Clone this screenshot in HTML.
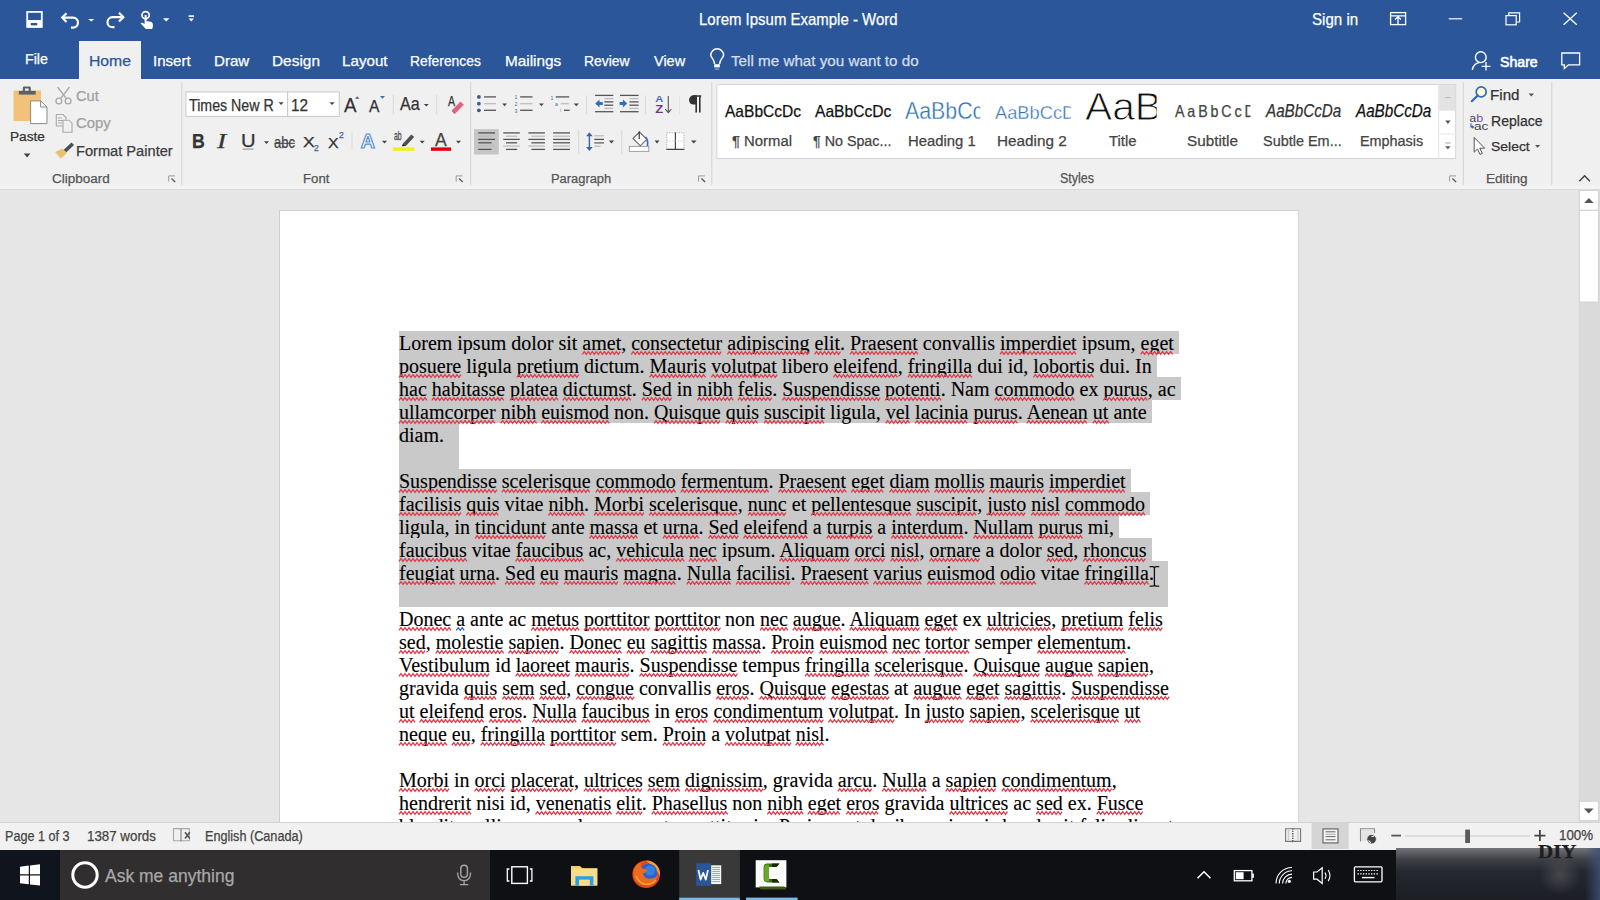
<!DOCTYPE html>
<html><head><meta charset="utf-8">
<style>
*{box-sizing:border-box;margin:0;padding:0}
html,body{width:1600px;height:900px;overflow:hidden;background:#e6e6e6;font-family:"Liberation Sans",sans-serif}
.a{position:absolute}
.lb{position:absolute;white-space:pre;transform-origin:0 0;font-family:"Liberation Sans",sans-serif;-webkit-text-stroke-width:0.25px}
svg{position:absolute;overflow:visible}
#title{left:0;top:0;width:1600px;height:79px;background:#2b579a}
#hometab{left:79px;top:41px;width:62px;height:38px;background:#f0f0f0}
#ribbon{left:0;top:79px;width:1600px;height:111px;background:#f0f0f0;border-bottom:1px solid #dadada;box-shadow:inset 0 -3px 0 #f4f4f4}
#docarea{left:0;top:190px;width:1578px;height:632px;background:#e6e6e7;overflow:hidden}
#page{left:279px;top:20px;width:1020px;height:700px;background:#fff;border:1px solid #cfcfcf;border-right-color:#d6d6d6}
#status{left:0;top:822px;width:1600px;height:28px;background:#f1f1f1;border-top:1px solid #d4d4d4}
#taskbar{left:0;top:850px;width:1600px;height:50px;background:#0f1013}
.doc{position:absolute;left:119px;font-family:"Liberation Serif",serif;font-size:20px;line-height:23px;color:#000;white-space:pre;-webkit-text-stroke:0.12px #000}
.ln{position:absolute;left:0;height:23px;padding-top:1px;white-space:pre}
.sel{background:#c9c9c9}
.sep{position:absolute;width:1px;background:#dadada}
.sq{}
.sqb{}

</style></head><body>
<div id="title" class="a"></div>
<div id="hometab" class="a"></div>
<div id="ribbon" class="a"></div>
<div id="docarea" class="a">
 <div id="page" class="a">
  <div class="doc" style="top:120px;left:119px">
<div class="ln sel" style="top:0px">Lorem ipsum dolor sit <span class="sq">amet</span>, <span class="sq">consectetur</span> <span class="sq">adipiscing</span> <span class="sq">elit</span>. <span class="sq">Praesent</span> convallis <span class="sq">imperdiet</span> ipsum, <span class="sq">eget</span> </div>
<div class="ln sel" style="top:23px"><span class="sq">posuere</span> ligula <span class="sq">pretium</span> dictum. <span class="sq">Mauris</span> <span class="sq">volutpat</span> libero <span class="sq">eleifend</span>, <span class="sq">fringilla</span> dui id, <span class="sq">lobortis</span> dui. In </div>
<div class="ln sel" style="top:46px"><span class="sq">hac</span> <span class="sq">habitasse</span> <span class="sq">platea</span> <span class="sq">dictumst</span>. <span class="sq">Sed</span> in <span class="sq">nibh</span> <span class="sq">felis</span>. <span class="sq">Suspendisse</span> <span class="sq">potenti</span>. Nam <span class="sq">commodo</span> ex <span class="sq">purus</span>, ac </div>
<div class="ln sel" style="top:69px"><span class="sq">ullamcorper</span> <span class="sq">nibh</span> <span class="sq">euismod</span> non. <span class="sq">Quisque</span> <span class="sq">quis</span> <span class="sq">suscipit</span> ligula, <span class="sq">vel</span> <span class="sq">lacinia</span> <span class="sq">purus</span>. <span class="sq">Aenean</span> <span class="sq">ut</span> ante </div>
<div class="ln sel" style="top:92px;width:60px">diam.</div>
<div class="ln sel" style="top:115px;width:60px"></div>
<div class="ln sel" style="top:138px"><span class="sq">Suspendisse</span> <span class="sq">scelerisque</span> <span class="sq">commodo</span> <span class="sq">fermentum</span>. <span class="sq">Praesent</span> <span class="sq">eget</span> <span class="sq">diam</span> <span class="sq">mollis</span> <span class="sq">mauris</span> <span class="sq">imperdiet</span> </div>
<div class="ln sel" style="top:161px"><span class="sq">facilisis</span> <span class="sq">quis</span> vitae <span class="sq">nibh</span>. <span class="sq">Morbi</span> <span class="sq">scelerisque</span>, <span class="sq">nunc</span> et <span class="sq">pellentesque</span> <span class="sq">suscipit</span>, <span class="sq">justo</span> <span class="sq">nisl</span> <span class="sq">commodo</span> </div>
<div class="ln sel" style="top:184px">ligula, in <span class="sq">tincidunt</span> ante <span class="sq">massa</span> et <span class="sq">urna</span>. <span class="sq">Sed</span> <span class="sq">eleifend</span> a <span class="sq">turpis</span> a <span class="sq">interdum</span>. <span class="sq">Nullam</span> <span class="sq">purus</span> mi, </div>
<div class="ln sel" style="top:207px"><span class="sq">faucibus</span> vitae <span class="sq">faucibus</span> ac, <span class="sq">vehicula</span> <span class="sq">nec</span> ipsum. <span class="sq">Aliquam</span> <span class="sq">orci</span> <span class="sq">nisl</span>, <span class="sq">ornare</span> a dolor <span class="sq">sed</span>, <span class="sq">rhoncus</span> </div>
<div class="ln sel" style="top:230px;width:769px"><span class="sq">feugiat</span> <span class="sq">urna</span>. <span class="sq">Sed</span> <span class="sq">eu</span> <span class="sq">mauris</span> <span class="sq">magna</span>. <span class="sq">Nulla</span> <span class="sq">facilisi</span>. <span class="sq">Praesent</span> <span class="sq">varius</span> <span class="sq">euismod</span> <span class="sq">odio</span> vitae <span class="sq">fringilla</span>.</div>
<div class="ln sel" style="top:253px;width:769px"></div>
<div class="ln" style="top:276px"><span class="sq">Donec</span> <span class="sqb">a</span> ante ac <span class="sq">metus</span> <span class="sq">porttitor</span> <span class="sq">porttitor</span> non <span class="sq">nec</span> <span class="sq">augue</span>. <span class="sq">Aliquam</span> <span class="sq">eget</span> ex <span class="sq">ultricies</span>, <span class="sq">pretium</span> <span class="sq">felis</span></div>
<div class="ln" style="top:299px"><span class="sq">sed</span>, <span class="sq">molestie</span> <span class="sq">sapien</span>. <span class="sq">Donec</span> <span class="sq">eu</span> <span class="sq">sagittis</span> <span class="sq">massa</span>. <span class="sq">Proin</span> <span class="sq">euismod</span> <span class="sq">nec</span> <span class="sq">tortor</span> semper <span class="sq">elementum</span>.</div>
<div class="ln" style="top:322px"><span class="sq">Vestibulum</span> id <span class="sq">laoreet</span> <span class="sq">mauris</span>. <span class="sq">Suspendisse</span> tempus <span class="sq">fringilla</span> <span class="sq">scelerisque</span>. <span class="sq">Quisque</span> <span class="sq">augue</span> <span class="sq">sapien</span>,</div>
<div class="ln" style="top:345px">gravida <span class="sq">quis</span> <span class="sq">sem</span> <span class="sq">sed</span>, <span class="sq">congue</span> convallis <span class="sq">eros</span>. <span class="sq">Quisque</span> <span class="sq">egestas</span> at <span class="sq">augue</span> <span class="sq">eget</span> <span class="sq">sagittis</span>. <span class="sq">Suspendisse</span></div>
<div class="ln" style="top:368px"><span class="sq">ut</span> <span class="sq">eleifend</span> <span class="sq">eros</span>. <span class="sq">Nulla</span> <span class="sq">faucibus</span> in <span class="sq">eros</span> <span class="sq">condimentum</span> <span class="sq">volutpat</span>. In <span class="sq">justo</span> <span class="sq">sapien</span>, <span class="sq">scelerisque</span> <span class="sq">ut</span></div>
<div class="ln" style="top:391px"><span class="sq">neque</span> <span class="sq">eu</span>, <span class="sq">fringilla</span> <span class="sq">porttitor</span> sem. <span class="sq">Proin</span> a <span class="sq">volutpat</span> <span class="sq">nisl</span>.</div>
<div class="ln" style="top:437px"><span class="sq">Morbi</span> in <span class="sq">orci</span> <span class="sq">placerat</span>, <span class="sq">ultrices</span> <span class="sq">sem</span> <span class="sq">dignissim</span>, gravida <span class="sq">arcu</span>. <span class="sq">Nulla</span> a <span class="sq">sapien</span> <span class="sq">condimentum</span>,</div>
<div class="ln" style="top:460px"><span class="sq">hendrerit</span> nisi id, <span class="sq">venenatis</span> <span class="sq">elit</span>. <span class="sq">Phasellus</span> non <span class="sq">nibh</span> <span class="sq">eget</span> <span class="sq">eros</span> gravida <span class="sq">ultrices</span> ac <span class="sq">sed</span> ex. <span class="sq">Fusce</span></div>
<div class="ln" style="top:483px"><span class="sq">blandit</span> <span class="sq">mollis</span> <span class="sq">arcu</span>, <span class="sq">vel</span> <span class="sq">ornare</span> ante <span class="sq">porttitor</span> in. <span class="sq">Proin</span> <span class="sq">eget</span> <span class="sq">dapibus</span> mi, <span class="sq">quis</span> <span class="sq">hendrerit</span> <span class="sq">felis</span> <span class="sq">aliquet</span></div>
  </div>
<svg style="left:-280px;top:-211px" width="1600" height="900" viewBox="0 0 1600 900"><path d="M582.3 354.3L584.3 351.6L586.3 354.3L588.3 351.6L590.3 354.3L592.3 351.6L594.3 354.3L596.3 351.6L598.3 354.3L600.3 351.6L602.3 354.3L604.3 351.6L606.3 354.3L608.3 351.6L610.3 354.3L612.3 351.6L614.3 354.3L616.3 351.6L618.3 354.3L620.3 351.6 M631.2 354.3L633.2 351.6L635.2 354.3L637.2 351.6L639.2 354.3L641.2 351.6L643.2 354.3L645.2 351.6L647.2 354.3L649.2 351.6L651.2 354.3L653.2 351.6L655.2 354.3L657.2 351.6L659.2 354.3L661.2 351.6L663.2 354.3L665.2 351.6L667.2 354.3L669.2 351.6L671.2 354.3L673.2 351.6L675.2 354.3L677.2 351.6L679.2 354.3L681.2 351.6L683.2 354.3L685.2 351.6L687.2 354.3L689.2 351.6L691.2 354.3L693.2 351.6L695.2 354.3L697.2 351.6L699.2 354.3L701.2 351.6L703.2 354.3L705.2 351.6L707.2 354.3L709.2 351.6L711.2 354.3L713.2 351.6L715.2 354.3L717.2 351.6L719.2 354.3L721.2 351.6 M727.3 354.3L729.3 351.6L731.3 354.3L733.3 351.6L735.3 354.3L737.3 351.6L739.3 354.3L741.3 351.6L743.3 354.3L745.3 351.6L747.3 354.3L749.3 351.6L751.3 354.3L753.3 351.6L755.3 354.3L757.3 351.6L759.3 354.3L761.3 351.6L763.3 354.3L765.3 351.6L767.3 354.3L769.3 351.6L771.3 354.3L773.3 351.6L775.3 354.3L777.3 351.6L779.3 354.3L781.3 351.6L783.3 354.3L785.3 351.6L787.3 354.3L789.3 351.6L791.3 354.3L793.3 351.6L795.3 354.3L797.3 351.6L799.3 354.3L801.3 351.6L803.3 354.3L805.3 351.6L807.3 354.3L809.3 351.6 M814.5 354.3L816.5 351.6L818.5 354.3L820.5 351.6L822.5 354.3L824.5 351.6L826.5 354.3L828.5 351.6L830.5 354.3L832.5 351.6L834.5 354.3L836.5 351.6L838.5 354.3L840.5 351.6 M850.0 354.3L852.0 351.6L854.0 354.3L856.0 351.6L858.0 354.3L860.0 351.6L862.0 354.3L864.0 351.6L866.0 354.3L868.0 351.6L870.0 354.3L872.0 351.6L874.0 354.3L876.0 351.6L878.0 354.3L880.0 351.6L882.0 354.3L884.0 351.6L886.0 354.3L888.0 351.6L890.0 354.3L892.0 351.6L894.0 354.3L896.0 351.6L898.0 354.3L900.0 351.6L902.0 354.3L904.0 351.6L906.0 354.3L908.0 351.6L910.0 354.3L912.0 351.6L914.0 354.3L916.0 351.6L918.0 354.3 M1000.0 354.3L1002.0 351.6L1004.0 354.3L1006.0 351.6L1008.0 354.3L1010.0 351.6L1012.0 354.3L1014.0 351.6L1016.0 354.3L1018.0 351.6L1020.0 354.3L1022.0 351.6L1024.0 354.3L1026.0 351.6L1028.0 354.3L1030.0 351.6L1032.0 354.3L1034.0 351.6L1036.0 354.3L1038.0 351.6L1040.0 354.3L1042.0 351.6L1044.0 354.3L1046.0 351.6L1048.0 354.3L1050.0 351.6L1052.0 354.3L1054.0 351.6L1056.0 354.3L1058.0 351.6L1060.0 354.3L1062.0 351.6L1064.0 354.3L1066.0 351.6L1068.0 354.3L1070.0 351.6L1072.0 354.3L1074.0 351.6L1076.0 354.3 M1140.6 354.3L1142.6 351.6L1144.6 354.3L1146.6 351.6L1148.6 354.3L1150.6 351.6L1152.6 354.3L1154.6 351.6L1156.6 354.3L1158.6 351.6L1160.6 354.3L1162.6 351.6L1164.6 354.3L1166.6 351.6L1168.6 354.3L1170.6 351.6L1172.6 354.3 M399.0 377.3L401.0 374.6L403.0 377.3L405.0 374.6L407.0 377.3L409.0 374.6L411.0 377.3L413.0 374.6L415.0 377.3L417.0 374.6L419.0 377.3L421.0 374.6L423.0 377.3L425.0 374.6L427.0 377.3L429.0 374.6L431.0 377.3L433.0 374.6L435.0 377.3L437.0 374.6L439.0 377.3L441.0 374.6L443.0 377.3L445.0 374.6L447.0 377.3L449.0 374.6L451.0 377.3L453.0 374.6L455.0 377.3L457.0 374.6L459.0 377.3L461.0 374.6 M516.8 377.3L518.8 374.6L520.8 377.3L522.8 374.6L524.8 377.3L526.8 374.6L528.8 377.3L530.8 374.6L532.8 377.3L534.8 374.6L536.8 377.3L538.8 374.6L540.8 377.3L542.8 374.6L544.8 377.3L546.8 374.6L548.8 377.3L550.8 374.6L552.8 377.3L554.8 374.6L556.8 377.3L558.8 374.6L560.8 377.3L562.8 374.6L564.8 377.3L566.8 374.6L568.8 377.3L570.8 374.6L572.8 377.3L574.8 374.6L576.8 377.3L578.8 374.6 M649.5 377.3L651.5 374.6L653.5 377.3L655.5 374.6L657.5 377.3L659.5 374.6L661.5 377.3L663.5 374.6L665.5 377.3L667.5 374.6L669.5 377.3L671.5 374.6L673.5 377.3L675.5 374.6L677.5 377.3L679.5 374.6L681.5 377.3L683.5 374.6L685.5 377.3L687.5 374.6L689.5 377.3L691.5 374.6L693.5 377.3L695.5 374.6L697.5 377.3L699.5 374.6L701.5 377.3L703.5 374.6L705.5 377.3 M711.2 377.3L713.2 374.6L715.2 377.3L717.2 374.6L719.2 377.3L721.2 374.6L723.2 377.3L725.2 374.6L727.2 377.3L729.2 374.6L731.2 377.3L733.2 374.6L735.2 377.3L737.2 374.6L739.2 377.3L741.2 374.6L743.2 377.3L745.2 374.6L747.2 377.3L749.2 374.6L751.2 377.3L753.2 374.6L755.2 377.3L757.2 374.6L759.2 377.3L761.2 374.6L763.2 377.3L765.2 374.6L767.2 377.3L769.2 374.6L771.2 377.3L773.2 374.6L775.2 377.3L777.2 374.6 M833.4 377.3L835.4 374.6L837.4 377.3L839.4 374.6L841.4 377.3L843.4 374.6L845.4 377.3L847.4 374.6L849.4 377.3L851.4 374.6L853.4 377.3L855.4 374.6L857.4 377.3L859.4 374.6L861.4 377.3L863.4 374.6L865.4 377.3L867.4 374.6L869.4 377.3L871.4 374.6L873.4 377.3L875.4 374.6L877.4 377.3L879.4 374.6L881.4 377.3L883.4 374.6L885.4 377.3L887.4 374.6L889.4 377.3L891.4 374.6L893.4 377.3L895.4 374.6L897.4 377.3 M907.8 377.3L909.8 374.6L911.8 377.3L913.8 374.6L915.8 377.3L917.8 374.6L919.8 377.3L921.8 374.6L923.8 377.3L925.8 374.6L927.8 377.3L929.8 374.6L931.8 377.3L933.8 374.6L935.8 377.3L937.8 374.6L939.8 377.3L941.8 374.6L943.8 377.3L945.8 374.6L947.8 377.3L949.8 374.6L951.8 377.3L953.8 374.6L955.8 377.3L957.8 374.6L959.8 377.3L961.8 374.6L963.8 377.3L965.8 374.6L967.8 377.3L969.8 374.6L971.8 377.3 M1033.4 377.3L1035.4 374.6L1037.4 377.3L1039.4 374.6L1041.4 377.3L1043.4 374.6L1045.4 377.3L1047.4 374.6L1049.4 377.3L1051.4 374.6L1053.4 377.3L1055.4 374.6L1057.4 377.3L1059.4 374.6L1061.4 377.3L1063.4 374.6L1065.4 377.3L1067.4 374.6L1069.4 377.3L1071.4 374.6L1073.4 377.3L1075.4 374.6L1077.4 377.3L1079.4 374.6L1081.4 377.3L1083.4 374.6L1085.4 377.3L1087.4 374.6L1089.4 377.3L1091.4 374.6L1093.4 377.3 M399.0 400.3L401.0 397.6L403.0 400.3L405.0 397.6L407.0 400.3L409.0 397.6L411.0 400.3L413.0 397.6L415.0 400.3L417.0 397.6L419.0 400.3L421.0 397.6L423.0 400.3L425.0 397.6L427.0 400.3 M431.8 400.3L433.8 397.6L435.8 400.3L437.8 397.6L439.8 400.3L441.8 397.6L443.8 400.3L445.8 397.6L447.8 400.3L449.8 397.6L451.8 400.3L453.8 397.6L455.8 400.3L457.8 397.6L459.8 400.3L461.8 397.6L463.8 400.3L465.8 397.6L467.8 400.3L469.8 397.6L471.8 400.3L473.8 397.6L475.8 400.3L477.8 397.6L479.8 400.3L481.8 397.6L483.8 400.3L485.8 397.6L487.8 400.3L489.8 397.6L491.8 400.3L493.8 397.6L495.8 400.3L497.8 397.6L499.8 400.3L501.8 397.6L503.8 400.3 M510.1 400.3L512.1 397.6L514.1 400.3L516.1 397.6L518.1 400.3L520.1 397.6L522.1 400.3L524.1 397.6L526.1 400.3L528.1 397.6L530.1 400.3L532.1 397.6L534.1 400.3L536.1 397.6L538.1 400.3L540.1 397.6L542.1 400.3L544.1 397.6L546.1 400.3L548.1 397.6L550.1 400.3L552.1 397.6L554.1 400.3L556.1 397.6L558.1 400.3 M562.8 400.3L564.8 397.6L566.8 400.3L568.8 397.6L570.8 400.3L572.8 397.6L574.8 400.3L576.8 397.6L578.8 400.3L580.8 397.6L582.8 400.3L584.8 397.6L586.8 400.3L588.8 397.6L590.8 400.3L592.8 397.6L594.8 400.3L596.8 397.6L598.8 400.3L600.8 397.6L602.8 400.3L604.8 397.6L606.8 400.3L608.8 397.6L610.8 400.3L612.8 397.6L614.8 400.3L616.8 397.6L618.8 400.3L620.8 397.6L622.8 400.3L624.8 397.6L626.8 400.3L628.8 397.6L630.8 400.3 M641.7 400.3L643.7 397.6L645.7 400.3L647.7 397.6L649.7 400.3L651.7 397.6L653.7 400.3L655.7 397.6L657.7 400.3L659.7 397.6L661.7 400.3L663.7 397.6L665.7 400.3L667.7 397.6L669.7 400.3L671.7 397.6 M697.3 400.3L699.3 397.6L701.3 400.3L703.3 397.6L705.3 400.3L707.3 397.6L709.3 400.3L711.3 397.6L713.3 400.3L715.3 397.6L717.3 400.3L719.3 397.6L721.3 400.3L723.3 397.6L725.3 400.3L727.3 397.6L729.3 400.3L731.3 397.6L733.3 400.3 M737.8 400.3L739.8 397.6L741.8 400.3L743.8 397.6L745.8 400.3L747.8 397.6L749.8 400.3L751.8 397.6L753.8 400.3L755.8 397.6L757.8 400.3L759.8 397.6L761.8 400.3L763.8 397.6L765.8 400.3L767.8 397.6L769.8 400.3L771.8 397.6 M782.3 400.3L784.3 397.6L786.3 400.3L788.3 397.6L790.3 400.3L792.3 397.6L794.3 400.3L796.3 397.6L798.3 400.3L800.3 397.6L802.3 400.3L804.3 397.6L806.3 400.3L808.3 397.6L810.3 400.3L812.3 397.6L814.3 400.3L816.3 397.6L818.3 400.3L820.3 397.6L822.3 400.3L824.3 397.6L826.3 400.3L828.3 397.6L830.3 400.3L832.3 397.6L834.3 400.3L836.3 397.6L838.3 400.3L840.3 397.6L842.3 400.3L844.3 397.6L846.3 400.3L848.3 397.6L850.3 400.3L852.3 397.6L854.3 400.3L856.3 397.6L858.3 400.3L860.3 397.6L862.3 400.3L864.3 397.6L866.3 400.3L868.3 397.6L870.3 400.3L872.3 397.6L874.3 400.3L876.3 397.6L878.3 400.3L880.3 397.6 M885.1 400.3L887.1 397.6L889.1 400.3L891.1 397.6L893.1 400.3L895.1 397.6L897.1 400.3L899.1 397.6L901.1 400.3L903.1 397.6L905.1 400.3L907.1 397.6L909.1 400.3L911.1 397.6L913.1 400.3L915.1 397.6L917.1 400.3L919.1 397.6L921.1 400.3L923.1 397.6L925.1 400.3L927.1 397.6L929.1 400.3L931.1 397.6L933.1 400.3L935.1 397.6L937.1 400.3L939.1 397.6L941.1 400.3 M994.5 400.3L996.5 397.6L998.5 400.3L1000.5 397.6L1002.5 400.3L1004.5 397.6L1006.5 400.3L1008.5 397.6L1010.5 400.3L1012.5 397.6L1014.5 400.3L1016.5 397.6L1018.5 400.3L1020.5 397.6L1022.5 400.3L1024.5 397.6L1026.5 400.3L1028.5 397.6L1030.5 400.3L1032.5 397.6L1034.5 400.3L1036.5 397.6L1038.5 400.3L1040.5 397.6L1042.5 400.3L1044.5 397.6L1046.5 400.3L1048.5 397.6L1050.5 400.3L1052.5 397.6L1054.5 400.3L1056.5 397.6L1058.5 400.3L1060.5 397.6L1062.5 400.3L1064.5 397.6L1066.5 400.3L1068.5 397.6L1070.5 400.3L1072.5 397.6L1074.5 400.3 M1103.4 400.3L1105.4 397.6L1107.4 400.3L1109.4 397.6L1111.4 400.3L1113.4 397.6L1115.4 400.3L1117.4 397.6L1119.4 400.3L1121.4 397.6L1123.4 400.3L1125.4 397.6L1127.4 400.3L1129.4 397.6L1131.4 400.3L1133.4 397.6L1135.4 400.3L1137.4 397.6L1139.4 400.3L1141.4 397.6L1143.4 400.3L1145.4 397.6L1147.4 400.3 M399.0 423.3L401.0 420.6L403.0 423.3L405.0 420.6L407.0 423.3L409.0 420.6L411.0 423.3L413.0 420.6L415.0 423.3L417.0 420.6L419.0 423.3L421.0 420.6L423.0 423.3L425.0 420.6L427.0 423.3L429.0 420.6L431.0 423.3L433.0 420.6L435.0 423.3L437.0 420.6L439.0 423.3L441.0 420.6L443.0 423.3L445.0 420.6L447.0 423.3L449.0 420.6L451.0 423.3L453.0 420.6L455.0 423.3L457.0 420.6L459.0 423.3L461.0 420.6L463.0 423.3L465.0 420.6L467.0 423.3L469.0 420.6L471.0 423.3L473.0 420.6L475.0 423.3L477.0 420.6L479.0 423.3L481.0 420.6L483.0 423.3L485.0 420.6L487.0 423.3L489.0 420.6L491.0 423.3L493.0 420.6L495.0 423.3 M500.6 423.3L502.6 420.6L504.6 423.3L506.6 420.6L508.6 423.3L510.6 420.6L512.6 423.3L514.6 420.6L516.6 423.3L518.6 420.6L520.6 423.3L522.6 420.6L524.6 423.3L526.6 420.6L528.6 423.3L530.6 420.6L532.6 423.3L534.6 420.6L536.6 423.3 M541.2 423.3L543.2 420.6L545.2 423.3L547.2 420.6L549.2 423.3L551.2 420.6L553.2 423.3L555.2 420.6L557.2 423.3L559.2 420.6L561.2 423.3L563.2 420.6L565.2 423.3L567.2 420.6L569.2 423.3L571.2 420.6L573.2 423.3L575.2 420.6L577.2 423.3L579.2 420.6L581.2 423.3L583.2 420.6L585.2 423.3L587.2 420.6L589.2 423.3L591.2 420.6L593.2 423.3L595.2 420.6L597.2 423.3L599.2 420.6L601.2 423.3L603.2 420.6L605.2 423.3L607.2 420.6L609.2 423.3 M654.0 423.3L656.0 420.6L658.0 423.3L660.0 420.6L662.0 423.3L664.0 420.6L666.0 423.3L668.0 420.6L670.0 423.3L672.0 420.6L674.0 423.3L676.0 420.6L678.0 423.3L680.0 420.6L682.0 423.3L684.0 420.6L686.0 423.3L688.0 420.6L690.0 423.3L692.0 420.6L694.0 423.3L696.0 420.6L698.0 423.3L700.0 420.6L702.0 423.3L704.0 420.6L706.0 423.3L708.0 420.6L710.0 423.3L712.0 420.6L714.0 423.3L716.0 420.6L718.0 423.3L720.0 420.6 M725.6 423.3L727.6 420.6L729.6 423.3L731.6 420.6L733.6 423.3L735.6 420.6L737.6 423.3L739.6 420.6L741.6 423.3L743.6 420.6L745.6 423.3L747.6 420.6L749.6 423.3L751.6 420.6L753.6 423.3L755.6 420.6L757.6 423.3 M764.0 423.3L766.0 420.6L768.0 423.3L770.0 420.6L772.0 423.3L774.0 420.6L776.0 423.3L778.0 420.6L780.0 423.3L782.0 420.6L784.0 423.3L786.0 420.6L788.0 423.3L790.0 420.6L792.0 423.3L794.0 420.6L796.0 423.3L798.0 420.6L800.0 423.3L802.0 420.6L804.0 423.3L806.0 420.6L808.0 423.3L810.0 420.6L812.0 423.3L814.0 420.6L816.0 423.3L818.0 420.6L820.0 423.3L822.0 420.6L824.0 423.3 M885.7 423.3L887.7 420.6L889.7 423.3L891.7 420.6L893.7 423.3L895.7 420.6L897.7 423.3L899.7 420.6L901.7 423.3L903.7 420.6L905.7 423.3L907.7 420.6L909.7 423.3 M915.1 423.3L917.1 420.6L919.1 423.3L921.1 420.6L923.1 423.3L925.1 420.6L927.1 423.3L929.1 420.6L931.1 423.3L933.1 420.6L935.1 423.3L937.1 420.6L939.1 423.3L941.1 420.6L943.1 423.3L945.1 420.6L947.1 423.3L949.1 420.6L951.1 423.3L953.1 420.6L955.1 423.3L957.1 420.6L959.1 423.3L961.1 420.6L963.1 423.3L965.1 420.6L967.1 423.3 M973.4 423.3L975.4 420.6L977.4 423.3L979.4 420.6L981.4 423.3L983.4 420.6L985.4 423.3L987.4 420.6L989.4 423.3L991.4 420.6L993.4 423.3L995.4 420.6L997.4 423.3L999.4 420.6L1001.4 423.3L1003.4 420.6L1005.4 423.3L1007.4 420.6L1009.4 423.3L1011.4 420.6L1013.4 423.3L1015.4 420.6L1017.4 423.3 M1026.8 423.3L1028.8 420.6L1030.8 423.3L1032.8 420.6L1034.8 423.3L1036.8 420.6L1038.8 423.3L1040.8 420.6L1042.8 423.3L1044.8 420.6L1046.8 423.3L1048.8 420.6L1050.8 423.3L1052.8 420.6L1054.8 423.3L1056.8 420.6L1058.8 423.3L1060.8 420.6L1062.8 423.3L1064.8 420.6L1066.8 423.3L1068.8 420.6L1070.8 423.3L1072.8 420.6L1074.8 423.3L1076.8 420.6L1078.8 423.3L1080.8 420.6L1082.8 423.3L1084.8 420.6L1086.8 423.3 M1092.8 423.3L1094.8 420.6L1096.8 423.3L1098.8 420.6L1100.8 423.3L1102.8 420.6L1104.8 423.3L1106.8 420.6L1108.8 423.3 M399.0 492.3L401.0 489.6L403.0 492.3L405.0 489.6L407.0 492.3L409.0 489.6L411.0 492.3L413.0 489.6L415.0 492.3L417.0 489.6L419.0 492.3L421.0 489.6L423.0 492.3L425.0 489.6L427.0 492.3L429.0 489.6L431.0 492.3L433.0 489.6L435.0 492.3L437.0 489.6L439.0 492.3L441.0 489.6L443.0 492.3L445.0 489.6L447.0 492.3L449.0 489.6L451.0 492.3L453.0 489.6L455.0 492.3L457.0 489.6L459.0 492.3L461.0 489.6L463.0 492.3L465.0 489.6L467.0 492.3L469.0 489.6L471.0 492.3L473.0 489.6L475.0 492.3L477.0 489.6L479.0 492.3L481.0 489.6L483.0 492.3L485.0 489.6L487.0 492.3L489.0 489.6L491.0 492.3L493.0 489.6L495.0 492.3L497.0 489.6 M501.8 492.3L503.8 489.6L505.8 492.3L507.8 489.6L509.8 492.3L511.8 489.6L513.8 492.3L515.8 489.6L517.8 492.3L519.8 489.6L521.8 492.3L523.8 489.6L525.8 492.3L527.8 489.6L529.8 492.3L531.8 489.6L533.8 492.3L535.8 489.6L537.8 492.3L539.8 489.6L541.8 492.3L543.8 489.6L545.8 492.3L547.8 489.6L549.8 492.3L551.8 489.6L553.8 492.3L555.8 489.6L557.8 492.3L559.8 489.6L561.8 492.3L563.8 489.6L565.8 492.3L567.8 489.6L569.8 492.3L571.8 489.6L573.8 492.3L575.8 489.6L577.8 492.3L579.8 489.6L581.8 492.3L583.8 489.6L585.8 492.3L587.8 489.6L589.8 492.3 M595.7 492.3L597.7 489.6L599.7 492.3L601.7 489.6L603.7 492.3L605.7 489.6L607.7 492.3L609.7 489.6L611.7 492.3L613.7 489.6L615.7 492.3L617.7 489.6L619.7 492.3L621.7 489.6L623.7 492.3L625.7 489.6L627.7 492.3L629.7 489.6L631.7 492.3L633.7 489.6L635.7 492.3L637.7 489.6L639.7 492.3L641.7 489.6L643.7 492.3L645.7 489.6L647.7 492.3L649.7 489.6L651.7 492.3L653.7 489.6L655.7 492.3L657.7 489.6L659.7 492.3L661.7 489.6L663.7 492.3L665.7 489.6L667.7 492.3L669.7 489.6L671.7 492.3L673.7 489.6L675.7 492.3 M680.7 492.3L682.7 489.6L684.7 492.3L686.7 489.6L688.7 492.3L690.7 489.6L692.7 492.3L694.7 489.6L696.7 492.3L698.7 489.6L700.7 492.3L702.7 489.6L704.7 492.3L706.7 489.6L708.7 492.3L710.7 489.6L712.7 492.3L714.7 489.6L716.7 492.3L718.7 489.6L720.7 492.3L722.7 489.6L724.7 492.3L726.7 489.6L728.7 492.3L730.7 489.6L732.7 492.3L734.7 489.6L736.7 492.3L738.7 489.6L740.7 492.3L742.7 489.6L744.7 492.3L746.7 489.6L748.7 492.3L750.7 489.6L752.7 492.3L754.7 489.6L756.7 492.3L758.7 489.6L760.7 492.3L762.7 489.6L764.7 492.3L766.7 489.6L768.7 492.3 M778.4 492.3L780.4 489.6L782.4 492.3L784.4 489.6L786.4 492.3L788.4 489.6L790.4 492.3L792.4 489.6L794.4 492.3L796.4 489.6L798.4 492.3L800.4 489.6L802.4 492.3L804.4 489.6L806.4 492.3L808.4 489.6L810.4 492.3L812.4 489.6L814.4 492.3L816.4 489.6L818.4 492.3L820.4 489.6L822.4 492.3L824.4 489.6L826.4 492.3L828.4 489.6L830.4 492.3L832.4 489.6L834.4 492.3L836.4 489.6L838.4 492.3L840.4 489.6L842.4 492.3L844.4 489.6L846.4 492.3 M851.2 492.3L853.2 489.6L855.2 492.3L857.2 489.6L859.2 492.3L861.2 489.6L863.2 492.3L865.2 489.6L867.2 492.3L869.2 489.6L871.2 492.3L873.2 489.6L875.2 492.3L877.2 489.6L879.2 492.3L881.2 489.6L883.2 492.3 M889.5 492.3L891.5 489.6L893.5 492.3L895.5 489.6L897.5 492.3L899.5 489.6L901.5 492.3L903.5 489.6L905.5 492.3L907.5 489.6L909.5 492.3L911.5 489.6L913.5 492.3L915.5 489.6L917.5 492.3L919.5 489.6L921.5 492.3L923.5 489.6L925.5 492.3L927.5 489.6L929.5 492.3 M934.5 492.3L936.5 489.6L938.5 492.3L940.5 489.6L942.5 492.3L944.5 489.6L946.5 492.3L948.5 489.6L950.5 492.3L952.5 489.6L954.5 492.3L956.5 489.6L958.5 492.3L960.5 489.6L962.5 492.3L964.5 489.6L966.5 492.3L968.5 489.6L970.5 492.3L972.5 489.6L974.5 492.3L976.5 489.6L978.5 492.3L980.5 489.6L982.5 492.3L984.5 489.6 M989.5 492.3L991.5 489.6L993.5 492.3L995.5 489.6L997.5 492.3L999.5 489.6L1001.5 492.3L1003.5 489.6L1005.5 492.3L1007.5 489.6L1009.5 492.3L1011.5 489.6L1013.5 492.3L1015.5 489.6L1017.5 492.3L1019.5 489.6L1021.5 492.3L1023.5 489.6L1025.5 492.3L1027.5 489.6L1029.5 492.3L1031.5 489.6L1033.5 492.3L1035.5 489.6L1037.5 492.3L1039.5 489.6L1041.5 492.3L1043.5 489.6 M1048.9 492.3L1050.9 489.6L1052.9 492.3L1054.9 489.6L1056.9 492.3L1058.9 489.6L1060.9 492.3L1062.9 489.6L1064.9 492.3L1066.9 489.6L1068.9 492.3L1070.9 489.6L1072.9 492.3L1074.9 489.6L1076.9 492.3L1078.9 489.6L1080.9 492.3L1082.9 489.6L1084.9 492.3L1086.9 489.6L1088.9 492.3L1090.9 489.6L1092.9 492.3L1094.9 489.6L1096.9 492.3L1098.9 489.6L1100.9 492.3L1102.9 489.6L1104.9 492.3L1106.9 489.6L1108.9 492.3L1110.9 489.6L1112.9 492.3L1114.9 489.6L1116.9 492.3L1118.9 489.6L1120.9 492.3L1122.9 489.6L1124.9 492.3 M399.0 515.3L401.0 512.6L403.0 515.3L405.0 512.6L407.0 515.3L409.0 512.6L411.0 515.3L413.0 512.6L415.0 515.3L417.0 512.6L419.0 515.3L421.0 512.6L423.0 515.3L425.0 512.6L427.0 515.3L429.0 512.6L431.0 515.3L433.0 512.6L435.0 515.3L437.0 512.6L439.0 515.3L441.0 512.6L443.0 515.3L445.0 512.6L447.0 515.3L449.0 512.6L451.0 515.3L453.0 512.6L455.0 515.3L457.0 512.6L459.0 515.3L461.0 512.6 M466.2 515.3L468.2 512.6L470.2 515.3L472.2 512.6L474.2 515.3L476.2 512.6L478.2 515.3L480.2 512.6L482.2 515.3L484.2 512.6L486.2 515.3L488.2 512.6L490.2 515.3L492.2 512.6L494.2 515.3L496.2 512.6L498.2 515.3 M548.4 515.3L550.4 512.6L552.4 515.3L554.4 512.6L556.4 515.3L558.4 512.6L560.4 515.3L562.4 512.6L564.4 515.3L566.4 512.6L568.4 515.3L570.4 512.6L572.4 515.3L574.4 512.6L576.4 515.3L578.4 512.6L580.4 515.3L582.4 512.6L584.4 515.3 M594.0 515.3L596.0 512.6L598.0 515.3L600.0 512.6L602.0 515.3L604.0 512.6L606.0 515.3L608.0 512.6L610.0 515.3L612.0 512.6L614.0 515.3L616.0 512.6L618.0 515.3L620.0 512.6L622.0 515.3L624.0 512.6L626.0 515.3L628.0 512.6L630.0 515.3L632.0 512.6L634.0 515.3L636.0 512.6L638.0 515.3L640.0 512.6L642.0 515.3L644.0 512.6 M649.0 515.3L651.0 512.6L653.0 515.3L655.0 512.6L657.0 515.3L659.0 512.6L661.0 515.3L663.0 512.6L665.0 515.3L667.0 512.6L669.0 515.3L671.0 512.6L673.0 515.3L675.0 512.6L677.0 515.3L679.0 512.6L681.0 515.3L683.0 512.6L685.0 515.3L687.0 512.6L689.0 515.3L691.0 512.6L693.0 515.3L695.0 512.6L697.0 515.3L699.0 512.6L701.0 515.3L703.0 512.6L705.0 515.3L707.0 512.6L709.0 515.3L711.0 512.6L713.0 515.3L715.0 512.6L717.0 515.3L719.0 512.6L721.0 515.3L723.0 512.6L725.0 515.3L727.0 512.6L729.0 515.3L731.0 512.6L733.0 515.3L735.0 512.6L737.0 515.3 M747.9 515.3L749.9 512.6L751.9 515.3L753.9 512.6L755.9 515.3L757.9 512.6L759.9 515.3L761.9 512.6L763.9 515.3L765.9 512.6L767.9 515.3L769.9 512.6L771.9 515.3L773.9 512.6L775.9 515.3L777.9 512.6L779.9 515.3L781.9 512.6L783.9 515.3L785.9 512.6 M811.2 515.3L813.2 512.6L815.2 515.3L817.2 512.6L819.2 515.3L821.2 512.6L823.2 515.3L825.2 512.6L827.2 515.3L829.2 512.6L831.2 515.3L833.2 512.6L835.2 515.3L837.2 512.6L839.2 515.3L841.2 512.6L843.2 515.3L845.2 512.6L847.2 515.3L849.2 512.6L851.2 515.3L853.2 512.6L855.2 515.3L857.2 512.6L859.2 515.3L861.2 512.6L863.2 515.3L865.2 512.6L867.2 515.3L869.2 512.6L871.2 515.3L873.2 512.6L875.2 515.3L877.2 512.6L879.2 515.3L881.2 512.6L883.2 515.3L885.2 512.6L887.2 515.3L889.2 512.6L891.2 515.3L893.2 512.6L895.2 515.3L897.2 512.6L899.2 515.3L901.2 512.6L903.2 515.3L905.2 512.6L907.2 515.3L909.2 512.6L911.2 515.3 M916.2 515.3L918.2 512.6L920.2 515.3L922.2 512.6L924.2 515.3L926.2 512.6L928.2 515.3L930.2 512.6L932.2 515.3L934.2 512.6L936.2 515.3L938.2 512.6L940.2 515.3L942.2 512.6L944.2 515.3L946.2 512.6L948.2 515.3L950.2 512.6L952.2 515.3L954.2 512.6L956.2 515.3L958.2 512.6L960.2 515.3L962.2 512.6L964.2 515.3L966.2 512.6L968.2 515.3L970.2 512.6L972.2 515.3L974.2 512.6L976.2 515.3 M987.3 515.3L989.3 512.6L991.3 515.3L993.3 512.6L995.3 515.3L997.3 512.6L999.3 515.3L1001.3 512.6L1003.3 515.3L1005.3 512.6L1007.3 515.3L1009.3 512.6L1011.3 515.3L1013.3 512.6L1015.3 515.3L1017.3 512.6L1019.3 515.3L1021.3 512.6L1023.3 515.3L1025.3 512.6 M1031.2 515.3L1033.2 512.6L1035.2 515.3L1037.2 512.6L1039.2 515.3L1041.2 512.6L1043.2 515.3L1045.2 512.6L1047.2 515.3L1049.2 512.6L1051.2 515.3L1053.2 512.6L1055.2 515.3L1057.2 512.6L1059.2 515.3 M1065.1 515.3L1067.1 512.6L1069.1 515.3L1071.1 512.6L1073.1 515.3L1075.1 512.6L1077.1 515.3L1079.1 512.6L1081.1 515.3L1083.1 512.6L1085.1 515.3L1087.1 512.6L1089.1 515.3L1091.1 512.6L1093.1 515.3L1095.1 512.6L1097.1 515.3L1099.1 512.6L1101.1 515.3L1103.1 512.6L1105.1 515.3L1107.1 512.6L1109.1 515.3L1111.1 512.6L1113.1 515.3L1115.1 512.6L1117.1 515.3L1119.1 512.6L1121.1 515.3L1123.1 512.6L1125.1 515.3L1127.1 512.6L1129.1 515.3L1131.1 512.6L1133.1 515.3L1135.1 512.6L1137.1 515.3L1139.1 512.6L1141.1 515.3L1143.1 512.6L1145.1 515.3 M475.1 538.3L477.1 535.6L479.1 538.3L481.1 535.6L483.1 538.3L485.1 535.6L487.1 538.3L489.1 535.6L491.1 538.3L493.1 535.6L495.1 538.3L497.1 535.6L499.1 538.3L501.1 535.6L503.1 538.3L505.1 535.6L507.1 538.3L509.1 535.6L511.1 538.3L513.1 535.6L515.1 538.3L517.1 535.6L519.1 538.3L521.1 535.6L523.1 538.3L525.1 535.6L527.1 538.3L529.1 535.6L531.1 538.3L533.1 535.6L535.1 538.3L537.1 535.6L539.1 538.3L541.1 535.6L543.1 538.3L545.1 535.6 M589.5 538.3L591.5 535.6L593.5 538.3L595.5 535.6L597.5 538.3L599.5 535.6L601.5 538.3L603.5 535.6L605.5 538.3L607.5 535.6L609.5 538.3L611.5 535.6L613.5 538.3L615.5 535.6L617.5 538.3L619.5 535.6L621.5 538.3L623.5 535.6L625.5 538.3L627.5 535.6L629.5 538.3L631.5 535.6L633.5 538.3L635.5 535.6L637.5 538.3 M662.9 538.3L664.9 535.6L666.9 538.3L668.9 535.6L670.9 538.3L672.9 535.6L674.9 538.3L676.9 535.6L678.9 538.3L680.9 535.6L682.9 538.3L684.9 535.6L686.9 538.3L688.9 535.6L690.9 538.3L692.9 535.6L694.9 538.3L696.9 535.6L698.9 538.3 M708.4 538.3L710.4 535.6L712.4 538.3L714.4 535.6L716.4 538.3L718.4 535.6L720.4 538.3L722.4 535.6L724.4 538.3L726.4 535.6L728.4 538.3L730.4 535.6L732.4 538.3L734.4 535.6L736.4 538.3L738.4 535.6 M743.4 538.3L745.4 535.6L747.4 538.3L749.4 535.6L751.4 538.3L753.4 535.6L755.4 538.3L757.4 535.6L759.4 538.3L761.4 535.6L763.4 538.3L765.4 535.6L767.4 538.3L769.4 535.6L771.4 538.3L773.4 535.6L775.4 538.3L777.4 535.6L779.4 538.3L781.4 535.6L783.4 538.3L785.4 535.6L787.4 538.3L789.4 535.6L791.4 538.3L793.4 535.6L795.4 538.3L797.4 535.6L799.4 538.3L801.4 535.6L803.4 538.3L805.4 535.6L807.4 538.3 M826.7 538.3L828.7 535.6L830.7 538.3L832.7 535.6L834.7 538.3L836.7 535.6L838.7 538.3L840.7 535.6L842.7 538.3L844.7 535.6L846.7 538.3L848.7 535.6L850.7 538.3L852.7 535.6L854.7 538.3L856.7 535.6L858.7 538.3L860.7 535.6L862.7 538.3L864.7 535.6L866.7 538.3L868.7 535.6L870.7 538.3L872.7 535.6 M891.2 538.3L893.2 535.6L895.2 538.3L897.2 535.6L899.2 538.3L901.2 535.6L903.2 538.3L905.2 535.6L907.2 538.3L909.2 535.6L911.2 538.3L913.2 535.6L915.2 538.3L917.2 535.6L919.2 538.3L921.2 535.6L923.2 538.3L925.2 535.6L927.2 538.3L929.2 535.6L931.2 538.3L933.2 535.6L935.2 538.3L937.2 535.6L939.2 538.3L941.2 535.6L943.2 538.3L945.2 535.6L947.2 538.3L949.2 535.6L951.2 538.3L953.2 535.6L955.2 538.3L957.2 535.6L959.2 538.3L961.2 535.6L963.2 538.3 M973.4 538.3L975.4 535.6L977.4 538.3L979.4 535.6L981.4 538.3L983.4 535.6L985.4 538.3L987.4 535.6L989.4 538.3L991.4 535.6L993.4 538.3L995.4 535.6L997.4 538.3L999.4 535.6L1001.4 538.3L1003.4 535.6L1005.4 538.3L1007.4 535.6L1009.4 538.3L1011.4 535.6L1013.4 538.3L1015.4 535.6L1017.4 538.3L1019.4 535.6L1021.4 538.3L1023.4 535.6L1025.4 538.3L1027.4 535.6L1029.4 538.3L1031.4 535.6L1033.4 538.3 M1038.4 538.3L1040.4 535.6L1042.4 538.3L1044.4 535.6L1046.4 538.3L1048.4 535.6L1050.4 538.3L1052.4 535.6L1054.4 538.3L1056.4 535.6L1058.4 538.3L1060.4 535.6L1062.4 538.3L1064.4 535.6L1066.4 538.3L1068.4 535.6L1070.4 538.3L1072.4 535.6L1074.4 538.3L1076.4 535.6L1078.4 538.3L1080.4 535.6L1082.4 538.3 M399.0 561.3L401.0 558.6L403.0 561.3L405.0 558.6L407.0 561.3L409.0 558.6L411.0 561.3L413.0 558.6L415.0 561.3L417.0 558.6L419.0 561.3L421.0 558.6L423.0 561.3L425.0 558.6L427.0 561.3L429.0 558.6L431.0 561.3L433.0 558.6L435.0 561.3L437.0 558.6L439.0 561.3L441.0 558.6L443.0 561.3L445.0 558.6L447.0 561.3L449.0 558.6L451.0 561.3L453.0 558.6L455.0 561.3L457.0 558.6L459.0 561.3L461.0 558.6L463.0 561.3L465.0 558.6L467.0 561.3 M515.6 561.3L517.6 558.6L519.6 561.3L521.6 558.6L523.6 561.3L525.6 558.6L527.6 561.3L529.6 558.6L531.6 561.3L533.6 558.6L535.6 561.3L537.6 558.6L539.6 561.3L541.6 558.6L543.6 561.3L545.6 558.6L547.6 561.3L549.6 558.6L551.6 561.3L553.6 558.6L555.6 561.3L557.6 558.6L559.6 561.3L561.6 558.6L563.6 561.3L565.6 558.6L567.6 561.3L569.6 558.6L571.6 561.3L573.6 558.6L575.6 561.3L577.6 558.6L579.6 561.3L581.6 558.6L583.6 561.3 M616.2 561.3L618.2 558.6L620.2 561.3L622.2 558.6L624.2 561.3L626.2 558.6L628.2 561.3L630.2 558.6L632.2 561.3L634.2 558.6L636.2 561.3L638.2 558.6L640.2 561.3L642.2 558.6L644.2 561.3L646.2 558.6L648.2 561.3L650.2 558.6L652.2 561.3L654.2 558.6L656.2 561.3L658.2 558.6L660.2 561.3L662.2 558.6L664.2 561.3L666.2 558.6L668.2 561.3L670.2 558.6L672.2 561.3L674.2 558.6L676.2 561.3L678.2 558.6L680.2 561.3L682.2 558.6L684.2 561.3 M688.9 561.3L690.9 558.6L692.9 561.3L694.9 558.6L696.9 561.3L698.9 558.6L700.9 561.3L702.9 558.6L704.9 561.3L706.9 558.6L708.9 561.3L710.9 558.6L712.9 561.3L714.9 558.6L716.9 561.3 M779.5 561.3L781.5 558.6L783.5 561.3L785.5 558.6L787.5 561.3L789.5 558.6L791.5 561.3L793.5 558.6L795.5 561.3L797.5 558.6L799.5 561.3L801.5 558.6L803.5 561.3L805.5 558.6L807.5 561.3L809.5 558.6L811.5 561.3L813.5 558.6L815.5 561.3L817.5 558.6L819.5 561.3L821.5 558.6L823.5 561.3L825.5 558.6L827.5 561.3L829.5 558.6L831.5 561.3L833.5 558.6L835.5 561.3L837.5 558.6L839.5 561.3L841.5 558.6L843.5 561.3L845.5 558.6L847.5 561.3L849.5 558.6 M854.5 561.3L856.5 558.6L858.5 561.3L860.5 558.6L862.5 561.3L864.5 558.6L866.5 561.3L868.5 558.6L870.5 561.3L872.5 558.6L874.5 561.3L876.5 558.6L878.5 561.3L880.5 558.6L882.5 561.3L884.5 558.6 M890.6 561.3L892.6 558.6L894.6 561.3L896.6 558.6L898.6 561.3L900.6 558.6L902.6 561.3L904.6 558.6L906.6 561.3L908.6 558.6L910.6 561.3L912.6 558.6L914.6 561.3L916.6 558.6L918.6 561.3 M929.5 561.3L931.5 558.6L933.5 561.3L935.5 558.6L937.5 561.3L939.5 558.6L941.5 561.3L943.5 558.6L945.5 561.3L947.5 558.6L949.5 561.3L951.5 558.6L953.5 561.3L955.5 558.6L957.5 561.3L959.5 558.6L961.5 561.3L963.5 558.6L965.5 561.3L967.5 558.6L969.5 561.3L971.5 558.6L973.5 561.3L975.5 558.6L977.5 561.3L979.5 558.6 M1046.7 561.3L1048.7 558.6L1050.7 561.3L1052.7 558.6L1054.7 561.3L1056.7 558.6L1058.7 561.3L1060.7 558.6L1062.7 561.3L1064.7 558.6L1066.7 561.3L1068.7 558.6L1070.7 561.3L1072.7 558.6 M1083.3 561.3L1085.3 558.6L1087.3 561.3L1089.3 558.6L1091.3 561.3L1093.3 558.6L1095.3 561.3L1097.3 558.6L1099.3 561.3L1101.3 558.6L1103.3 561.3L1105.3 558.6L1107.3 561.3L1109.3 558.6L1111.3 561.3L1113.3 558.6L1115.3 561.3L1117.3 558.6L1119.3 561.3L1121.3 558.6L1123.3 561.3L1125.3 558.6L1127.3 561.3L1129.3 558.6L1131.3 561.3L1133.3 558.6L1135.3 561.3L1137.3 558.6L1139.3 561.3L1141.3 558.6L1143.3 561.3L1145.3 558.6 M399.0 584.3L401.0 581.6L403.0 584.3L405.0 581.6L407.0 584.3L409.0 581.6L411.0 584.3L413.0 581.6L415.0 584.3L417.0 581.6L419.0 584.3L421.0 581.6L423.0 584.3L425.0 581.6L427.0 584.3L429.0 581.6L431.0 584.3L433.0 581.6L435.0 584.3L437.0 581.6L439.0 584.3L441.0 581.6L443.0 584.3L445.0 581.6L447.0 584.3L449.0 581.6L451.0 584.3L453.0 581.6L455.0 584.3 M459.5 584.3L461.5 581.6L463.5 584.3L465.5 581.6L467.5 584.3L469.5 581.6L471.5 584.3L473.5 581.6L475.5 584.3L477.5 581.6L479.5 584.3L481.5 581.6L483.5 584.3L485.5 581.6L487.5 584.3L489.5 581.6L491.5 584.3L493.5 581.6L495.5 584.3 M505.1 584.3L507.1 581.6L509.1 584.3L511.1 581.6L513.1 584.3L515.1 581.6L517.1 584.3L519.1 581.6L521.1 584.3L523.1 581.6L525.1 584.3L527.1 581.6L529.1 584.3L531.1 581.6L533.1 584.3L535.1 581.6 M540.1 584.3L542.1 581.6L544.1 584.3L546.1 581.6L548.1 584.3L550.1 581.6L552.1 584.3L554.1 581.6L556.1 584.3L558.1 581.6 M564.0 584.3L566.0 581.6L568.0 584.3L570.0 581.6L572.0 584.3L574.0 581.6L576.0 584.3L578.0 581.6L580.0 584.3L582.0 581.6L584.0 584.3L586.0 581.6L588.0 584.3L590.0 581.6L592.0 584.3L594.0 581.6L596.0 584.3L598.0 581.6L600.0 584.3L602.0 581.6L604.0 584.3L606.0 581.6L608.0 584.3L610.0 581.6L612.0 584.3L614.0 581.6L616.0 584.3L618.0 581.6 M623.4 584.3L625.4 581.6L627.4 584.3L629.4 581.6L631.4 584.3L633.4 581.6L635.4 584.3L637.4 581.6L639.4 584.3L641.4 581.6L643.4 584.3L645.4 581.6L647.4 584.3L649.4 581.6L651.4 584.3L653.4 581.6L655.4 584.3L657.4 581.6L659.4 584.3L661.4 581.6L663.4 584.3L665.4 581.6L667.4 584.3L669.4 581.6L671.4 584.3L673.4 581.6L675.4 584.3 M686.7 584.3L688.7 581.6L690.7 584.3L692.7 581.6L694.7 584.3L696.7 581.6L698.7 584.3L700.7 581.6L702.7 584.3L704.7 581.6L706.7 584.3L708.7 581.6L710.7 584.3L712.7 581.6L714.7 584.3L716.7 581.6L718.7 584.3L720.7 581.6L722.7 584.3L724.7 581.6L726.7 584.3L728.7 581.6L730.7 584.3 M736.2 584.3L738.2 581.6L740.2 584.3L742.2 581.6L744.2 584.3L746.2 581.6L748.2 584.3L750.2 581.6L752.2 584.3L754.2 581.6L756.2 584.3L758.2 581.6L760.2 584.3L762.2 581.6L764.2 584.3L766.2 581.6L768.2 584.3L770.2 581.6L772.2 584.3L774.2 581.6L776.2 584.3L778.2 581.6L780.2 584.3L782.2 581.6L784.2 584.3L786.2 581.6L788.2 584.3L790.2 581.6 M800.6 584.3L802.6 581.6L804.6 584.3L806.6 581.6L808.6 584.3L810.6 581.6L812.6 584.3L814.6 581.6L816.6 584.3L818.6 581.6L820.6 584.3L822.6 581.6L824.6 584.3L826.6 581.6L828.6 584.3L830.6 581.6L832.6 584.3L834.6 581.6L836.6 584.3L838.6 581.6L840.6 584.3L842.6 581.6L844.6 584.3L846.6 581.6L848.6 584.3L850.6 581.6L852.6 584.3L854.6 581.6L856.6 584.3L858.6 581.6L860.6 584.3L862.6 581.6L864.6 584.3L866.6 581.6L868.6 584.3 M873.4 584.3L875.4 581.6L877.4 584.3L879.4 581.6L881.4 584.3L883.4 581.6L885.4 584.3L887.4 581.6L889.4 584.3L891.4 581.6L893.4 584.3L895.4 581.6L897.4 584.3L899.4 581.6L901.4 584.3L903.4 581.6L905.4 584.3L907.4 581.6L909.4 584.3L911.4 581.6L913.4 584.3L915.4 581.6L917.4 584.3L919.4 581.6L921.4 584.3 M927.2 584.3L929.2 581.6L931.2 584.3L933.2 581.6L935.2 584.3L937.2 581.6L939.2 584.3L941.2 581.6L943.2 584.3L945.2 581.6L947.2 584.3L949.2 581.6L951.2 584.3L953.2 581.6L955.2 584.3L957.2 581.6L959.2 584.3L961.2 581.6L963.2 584.3L965.2 581.6L967.2 584.3L969.2 581.6L971.2 584.3L973.2 581.6L975.2 584.3L977.2 581.6L979.2 584.3L981.2 581.6L983.2 584.3L985.2 581.6L987.2 584.3L989.2 581.6L991.2 584.3L993.2 581.6L995.2 584.3 M1000.0 584.3L1002.0 581.6L1004.0 584.3L1006.0 581.6L1008.0 584.3L1010.0 581.6L1012.0 584.3L1014.0 581.6L1016.0 584.3L1018.0 581.6L1020.0 584.3L1022.0 581.6L1024.0 584.3L1026.0 581.6L1028.0 584.3L1030.0 581.6L1032.0 584.3L1034.0 581.6L1036.0 584.3 M1084.5 584.3L1086.5 581.6L1088.5 584.3L1090.5 581.6L1092.5 584.3L1094.5 581.6L1096.5 584.3L1098.5 581.6L1100.5 584.3L1102.5 581.6L1104.5 584.3L1106.5 581.6L1108.5 584.3L1110.5 581.6L1112.5 584.3L1114.5 581.6L1116.5 584.3L1118.5 581.6L1120.5 584.3L1122.5 581.6L1124.5 584.3L1126.5 581.6L1128.5 584.3L1130.5 581.6L1132.5 584.3L1134.5 581.6L1136.5 584.3L1138.5 581.6L1140.5 584.3L1142.5 581.6L1144.5 584.3L1146.5 581.6L1148.5 584.3 M399.0 630.3L401.0 627.6L403.0 630.3L405.0 627.6L407.0 630.3L409.0 627.6L411.0 630.3L413.0 627.6L415.0 630.3L417.0 627.6L419.0 630.3L421.0 627.6L423.0 630.3L425.0 627.6L427.0 630.3L429.0 627.6L431.0 630.3L433.0 627.6L435.0 630.3L437.0 627.6L439.0 630.3L441.0 627.6L443.0 630.3L445.0 627.6L447.0 630.3L449.0 627.6L451.0 630.3 M531.2 630.3L533.2 627.6L535.2 630.3L537.2 627.6L539.2 630.3L541.2 627.6L543.2 630.3L545.2 627.6L547.2 630.3L549.2 627.6L551.2 630.3L553.2 627.6L555.2 630.3L557.2 627.6L559.2 630.3L561.2 627.6L563.2 630.3L565.2 627.6L567.2 630.3L569.2 627.6L571.2 630.3L573.2 627.6L575.2 630.3L577.2 627.6L579.2 630.3 M584.0 630.3L586.0 627.6L588.0 630.3L590.0 627.6L592.0 630.3L594.0 627.6L596.0 630.3L598.0 627.6L600.0 630.3L602.0 627.6L604.0 630.3L606.0 627.6L608.0 630.3L610.0 627.6L612.0 630.3L614.0 627.6L616.0 630.3L618.0 627.6L620.0 630.3L622.0 627.6L624.0 630.3L626.0 627.6L628.0 630.3L630.0 627.6L632.0 630.3L634.0 627.6L636.0 630.3L638.0 627.6L640.0 630.3L642.0 627.6L644.0 630.3L646.0 627.6L648.0 630.3L650.0 627.6 M654.5 630.3L656.5 627.6L658.5 630.3L660.5 627.6L662.5 630.3L664.5 627.6L666.5 630.3L668.5 627.6L670.5 630.3L672.5 627.6L674.5 630.3L676.5 627.6L678.5 630.3L680.5 627.6L682.5 630.3L684.5 627.6L686.5 630.3L688.5 627.6L690.5 630.3L692.5 627.6L694.5 630.3L696.5 627.6L698.5 630.3L700.5 627.6L702.5 630.3L704.5 627.6L706.5 630.3L708.5 627.6L710.5 630.3L712.5 627.6L714.5 630.3L716.5 627.6L718.5 630.3L720.5 627.6 M760.0 630.3L762.0 627.6L764.0 630.3L766.0 627.6L768.0 630.3L770.0 627.6L772.0 630.3L774.0 627.6L776.0 630.3L778.0 627.6L780.0 630.3L782.0 627.6L784.0 630.3L786.0 627.6L788.0 630.3 M792.8 630.3L794.8 627.6L796.8 630.3L798.8 627.6L800.8 630.3L802.8 627.6L804.8 630.3L806.8 627.6L808.8 630.3L810.8 627.6L812.8 630.3L814.8 627.6L816.8 630.3L818.8 627.6L820.8 630.3L822.8 627.6L824.8 630.3L826.8 627.6L828.8 630.3L830.8 627.6L832.8 630.3L834.8 627.6L836.8 630.3L838.8 627.6L840.8 630.3 M849.5 630.3L851.5 627.6L853.5 630.3L855.5 627.6L857.5 630.3L859.5 627.6L861.5 630.3L863.5 627.6L865.5 630.3L867.5 627.6L869.5 630.3L871.5 627.6L873.5 630.3L875.5 627.6L877.5 630.3L879.5 627.6L881.5 630.3L883.5 627.6L885.5 630.3L887.5 627.6L889.5 630.3L891.5 627.6L893.5 630.3L895.5 627.6L897.5 630.3L899.5 627.6L901.5 630.3L903.5 627.6L905.5 630.3L907.5 627.6L909.5 630.3L911.5 627.6L913.5 630.3L915.5 627.6L917.5 630.3L919.5 627.6 M924.5 630.3L926.5 627.6L928.5 630.3L930.5 627.6L932.5 630.3L934.5 627.6L936.5 630.3L938.5 627.6L940.5 630.3L942.5 627.6L944.5 630.3L946.5 627.6L948.5 630.3L950.5 627.6L952.5 630.3L954.5 627.6L956.5 630.3 M986.7 630.3L988.7 627.6L990.7 630.3L992.7 627.6L994.7 630.3L996.7 627.6L998.7 630.3L1000.7 627.6L1002.7 630.3L1004.7 627.6L1006.7 630.3L1008.7 627.6L1010.7 630.3L1012.7 627.6L1014.7 630.3L1016.7 627.6L1018.7 630.3L1020.7 627.6L1022.7 630.3L1024.7 627.6L1026.7 630.3L1028.7 627.6L1030.7 630.3L1032.7 627.6L1034.7 630.3L1036.7 627.6L1038.7 630.3L1040.7 627.6L1042.7 630.3L1044.7 627.6L1046.7 630.3L1048.7 627.6L1050.7 630.3 M1061.1 630.3L1063.1 627.6L1065.1 630.3L1067.1 627.6L1069.1 630.3L1071.1 627.6L1073.1 630.3L1075.1 627.6L1077.1 630.3L1079.1 627.6L1081.1 630.3L1083.1 627.6L1085.1 630.3L1087.1 627.6L1089.1 630.3L1091.1 627.6L1093.1 630.3L1095.1 627.6L1097.1 630.3L1099.1 627.6L1101.1 630.3L1103.1 627.6L1105.1 630.3L1107.1 627.6L1109.1 630.3L1111.1 627.6L1113.1 630.3L1115.1 627.6L1117.1 630.3L1119.1 627.6L1121.1 630.3L1123.1 627.6 M1128.3 630.3L1130.3 627.6L1132.3 630.3L1134.3 627.6L1136.3 630.3L1138.3 627.6L1140.3 630.3L1142.3 627.6L1144.3 630.3L1146.3 627.6L1148.3 630.3L1150.3 627.6L1152.3 630.3L1154.3 627.6L1156.3 630.3L1158.3 627.6L1160.3 630.3L1162.3 627.6 M399.0 653.3L401.0 650.6L403.0 653.3L405.0 650.6L407.0 653.3L409.0 650.6L411.0 653.3L413.0 650.6L415.0 653.3L417.0 650.6L419.0 653.3L421.0 650.6L423.0 653.3L425.0 650.6 M435.7 653.3L437.7 650.6L439.7 653.3L441.7 650.6L443.7 653.3L445.7 650.6L447.7 653.3L449.7 650.6L451.7 653.3L453.7 650.6L455.7 653.3L457.7 650.6L459.7 653.3L461.7 650.6L463.7 653.3L465.7 650.6L467.7 653.3L469.7 650.6L471.7 653.3L473.7 650.6L475.7 653.3L477.7 650.6L479.7 653.3L481.7 650.6L483.7 653.3L485.7 650.6L487.7 653.3L489.7 650.6L491.7 653.3L493.7 650.6L495.7 653.3L497.7 650.6L499.7 653.3L501.7 650.6L503.7 653.3 M508.4 653.3L510.4 650.6L512.4 653.3L514.4 650.6L516.4 653.3L518.4 650.6L520.4 653.3L522.4 650.6L524.4 653.3L526.4 650.6L528.4 653.3L530.4 650.6L532.4 653.3L534.4 650.6L536.4 653.3L538.4 650.6L540.4 653.3L542.4 650.6L544.4 653.3L546.4 650.6L548.4 653.3L550.4 650.6L552.4 653.3L554.4 650.6L556.4 653.3L558.4 650.6 M569.5 653.3L571.5 650.6L573.5 653.3L575.5 650.6L577.5 653.3L579.5 650.6L581.5 653.3L583.5 650.6L585.5 653.3L587.5 650.6L589.5 653.3L591.5 650.6L593.5 653.3L595.5 650.6L597.5 653.3L599.5 650.6L601.5 653.3L603.5 650.6L605.5 653.3L607.5 650.6L609.5 653.3L611.5 650.6L613.5 653.3L615.5 650.6L617.5 653.3L619.5 650.6L621.5 653.3 M626.7 653.3L628.7 650.6L630.7 653.3L632.7 650.6L634.7 653.3L636.7 650.6L638.7 653.3L640.7 650.6L642.7 653.3L644.7 650.6 M650.6 653.3L652.6 650.6L654.6 653.3L656.6 650.6L658.6 653.3L660.6 650.6L662.6 653.3L664.6 650.6L666.6 653.3L668.6 650.6L670.6 653.3L672.6 650.6L674.6 653.3L676.6 650.6L678.6 653.3L680.6 650.6L682.6 653.3L684.6 650.6L686.6 653.3L688.6 650.6L690.6 653.3L692.6 650.6L694.6 653.3L696.6 650.6L698.6 653.3L700.6 650.6L702.6 653.3L704.6 650.6L706.6 653.3 M712.3 653.3L714.3 650.6L716.3 653.3L718.3 650.6L720.3 653.3L722.3 650.6L724.3 653.3L726.3 650.6L728.3 653.3L730.3 650.6L732.3 653.3L734.3 650.6L736.3 653.3L738.3 650.6L740.3 653.3L742.3 650.6L744.3 653.3L746.3 650.6L748.3 653.3L750.3 650.6L752.3 653.3L754.3 650.6L756.3 653.3L758.3 650.6L760.3 653.3 M771.2 653.3L773.2 650.6L775.2 653.3L777.2 650.6L779.2 653.3L781.2 650.6L783.2 653.3L785.2 650.6L787.2 653.3L789.2 650.6L791.2 653.3L793.2 650.6L795.2 653.3L797.2 650.6L799.2 653.3L801.2 650.6L803.2 653.3L805.2 650.6L807.2 653.3L809.2 650.6L811.2 653.3L813.2 650.6 M819.5 653.3L821.5 650.6L823.5 653.3L825.5 650.6L827.5 653.3L829.5 650.6L831.5 653.3L833.5 650.6L835.5 653.3L837.5 650.6L839.5 653.3L841.5 650.6L843.5 653.3L845.5 650.6L847.5 653.3L849.5 650.6L851.5 653.3L853.5 650.6L855.5 653.3L857.5 650.6L859.5 653.3L861.5 650.6L863.5 653.3L865.5 650.6L867.5 653.3L869.5 650.6L871.5 653.3L873.5 650.6L875.5 653.3L877.5 650.6L879.5 653.3L881.5 650.6L883.5 653.3L885.5 650.6L887.5 653.3 M892.3 653.3L894.3 650.6L896.3 653.3L898.3 650.6L900.3 653.3L902.3 650.6L904.3 653.3L906.3 650.6L908.3 653.3L910.3 650.6L912.3 653.3L914.3 650.6L916.3 653.3L918.3 650.6L920.3 653.3 M925.1 653.3L927.1 650.6L929.1 653.3L931.1 650.6L933.1 653.3L935.1 650.6L937.1 653.3L939.1 650.6L941.1 653.3L943.1 650.6L945.1 653.3L947.1 650.6L949.1 653.3L951.1 650.6L953.1 653.3L955.1 650.6L957.1 653.3L959.1 650.6L961.1 653.3L963.1 650.6L965.1 653.3L967.1 650.6L969.1 653.3 M1037.3 653.3L1039.3 650.6L1041.3 653.3L1043.3 650.6L1045.3 653.3L1047.3 650.6L1049.3 653.3L1051.3 650.6L1053.3 653.3L1055.3 650.6L1057.3 653.3L1059.3 650.6L1061.3 653.3L1063.3 650.6L1065.3 653.3L1067.3 650.6L1069.3 653.3L1071.3 650.6L1073.3 653.3L1075.3 650.6L1077.3 653.3L1079.3 650.6L1081.3 653.3L1083.3 650.6L1085.3 653.3L1087.3 650.6L1089.3 653.3L1091.3 650.6L1093.3 653.3L1095.3 650.6L1097.3 653.3L1099.3 650.6L1101.3 653.3L1103.3 650.6L1105.3 653.3L1107.3 650.6L1109.3 653.3L1111.3 650.6L1113.3 653.3L1115.3 650.6L1117.3 653.3L1119.3 650.6L1121.3 653.3L1123.3 650.6L1125.3 653.3 M399.0 676.3L401.0 673.6L403.0 676.3L405.0 673.6L407.0 676.3L409.0 673.6L411.0 676.3L413.0 673.6L415.0 676.3L417.0 673.6L419.0 676.3L421.0 673.6L423.0 676.3L425.0 673.6L427.0 676.3L429.0 673.6L431.0 676.3L433.0 673.6L435.0 676.3L437.0 673.6L439.0 676.3L441.0 673.6L443.0 676.3L445.0 673.6L447.0 676.3L449.0 673.6L451.0 676.3L453.0 673.6L455.0 676.3L457.0 673.6L459.0 676.3L461.0 673.6L463.0 676.3L465.0 673.6L467.0 676.3L469.0 673.6L471.0 676.3L473.0 673.6L475.0 676.3L477.0 673.6L479.0 676.3L481.0 673.6L483.0 676.3L485.0 673.6L487.0 676.3L489.0 673.6 M515.7 676.3L517.7 673.6L519.7 676.3L521.7 673.6L523.7 676.3L525.7 673.6L527.7 676.3L529.7 673.6L531.7 676.3L533.7 673.6L535.7 676.3L537.7 673.6L539.7 676.3L541.7 673.6L543.7 676.3L545.7 673.6L547.7 676.3L549.7 673.6L551.7 676.3L553.7 673.6L555.7 676.3L557.7 673.6L559.7 676.3L561.7 673.6L563.7 676.3L565.7 673.6L567.7 676.3L569.7 673.6 M575.1 676.3L577.1 673.6L579.1 676.3L581.1 673.6L583.1 676.3L585.1 673.6L587.1 676.3L589.1 673.6L591.1 676.3L593.1 673.6L595.1 676.3L597.1 673.6L599.1 676.3L601.1 673.6L603.1 676.3L605.1 673.6L607.1 676.3L609.1 673.6L611.1 676.3L613.1 673.6L615.1 676.3L617.1 673.6L619.1 676.3L621.1 673.6L623.1 676.3L625.1 673.6L627.1 676.3L629.1 673.6 M639.5 676.3L641.5 673.6L643.5 676.3L645.5 673.6L647.5 676.3L649.5 673.6L651.5 676.3L653.5 673.6L655.5 676.3L657.5 673.6L659.5 676.3L661.5 673.6L663.5 676.3L665.5 673.6L667.5 676.3L669.5 673.6L671.5 676.3L673.5 673.6L675.5 676.3L677.5 673.6L679.5 676.3L681.5 673.6L683.5 676.3L685.5 673.6L687.5 676.3L689.5 673.6L691.5 676.3L693.5 673.6L695.5 676.3L697.5 673.6L699.5 676.3L701.5 673.6L703.5 676.3L705.5 673.6L707.5 676.3L709.5 673.6L711.5 676.3L713.5 673.6L715.5 676.3L717.5 673.6L719.5 676.3L721.5 673.6L723.5 676.3L725.5 673.6L727.5 676.3L729.5 673.6L731.5 676.3L733.5 673.6L735.5 676.3L737.5 673.6 M805.1 676.3L807.1 673.6L809.1 676.3L811.1 673.6L813.1 676.3L815.1 673.6L817.1 676.3L819.1 673.6L821.1 676.3L823.1 673.6L825.1 676.3L827.1 673.6L829.1 676.3L831.1 673.6L833.1 676.3L835.1 673.6L837.1 676.3L839.1 673.6L841.1 676.3L843.1 673.6L845.1 676.3L847.1 673.6L849.1 676.3L851.1 673.6L853.1 676.3L855.1 673.6L857.1 676.3L859.1 673.6L861.1 676.3L863.1 673.6L865.1 676.3L867.1 673.6L869.1 676.3 M874.5 676.3L876.5 673.6L878.5 676.3L880.5 673.6L882.5 676.3L884.5 673.6L886.5 676.3L888.5 673.6L890.5 676.3L892.5 673.6L894.5 676.3L896.5 673.6L898.5 676.3L900.5 673.6L902.5 676.3L904.5 673.6L906.5 676.3L908.5 673.6L910.5 676.3L912.5 673.6L914.5 676.3L916.5 673.6L918.5 676.3L920.5 673.6L922.5 676.3L924.5 673.6L926.5 676.3L928.5 673.6L930.5 676.3L932.5 673.6L934.5 676.3L936.5 673.6L938.5 676.3L940.5 673.6L942.5 676.3L944.5 673.6L946.5 676.3L948.5 673.6L950.5 676.3L952.5 673.6L954.5 676.3L956.5 673.6L958.5 676.3L960.5 673.6L962.5 676.3 M973.4 676.3L975.4 673.6L977.4 676.3L979.4 673.6L981.4 676.3L983.4 673.6L985.4 676.3L987.4 673.6L989.4 676.3L991.4 673.6L993.4 676.3L995.4 673.6L997.4 676.3L999.4 673.6L1001.4 676.3L1003.4 673.6L1005.4 676.3L1007.4 673.6L1009.4 676.3L1011.4 673.6L1013.4 676.3L1015.4 673.6L1017.4 676.3L1019.4 673.6L1021.4 676.3L1023.4 673.6L1025.4 676.3L1027.4 673.6L1029.4 676.3L1031.4 673.6L1033.4 676.3L1035.4 673.6L1037.4 676.3L1039.4 673.6 M1045.1 676.3L1047.1 673.6L1049.1 676.3L1051.1 673.6L1053.1 676.3L1055.1 673.6L1057.1 676.3L1059.1 673.6L1061.1 676.3L1063.1 673.6L1065.1 676.3L1067.1 673.6L1069.1 676.3L1071.1 673.6L1073.1 676.3L1075.1 673.6L1077.1 676.3L1079.1 673.6L1081.1 676.3L1083.1 673.6L1085.1 676.3L1087.1 673.6L1089.1 676.3L1091.1 673.6L1093.1 676.3 M1097.8 676.3L1099.8 673.6L1101.8 676.3L1103.8 673.6L1105.8 676.3L1107.8 673.6L1109.8 676.3L1111.8 673.6L1113.8 676.3L1115.8 673.6L1117.8 676.3L1119.8 673.6L1121.8 676.3L1123.8 673.6L1125.8 676.3L1127.8 673.6L1129.8 676.3L1131.8 673.6L1133.8 676.3L1135.8 673.6L1137.8 676.3L1139.8 673.6L1141.8 676.3L1143.8 673.6L1145.8 676.3L1147.8 673.6 M464.0 699.3L466.0 696.6L468.0 699.3L470.0 696.6L472.0 699.3L474.0 696.6L476.0 699.3L478.0 696.6L480.0 699.3L482.0 696.6L484.0 699.3L486.0 696.6L488.0 699.3L490.0 696.6L492.0 699.3L494.0 696.6L496.0 699.3 M502.3 699.3L504.3 696.6L506.3 699.3L508.3 696.6L510.3 699.3L512.3 696.6L514.3 699.3L516.3 696.6L518.3 699.3L520.3 696.6L522.3 699.3L524.3 696.6L526.3 699.3L528.3 696.6L530.3 699.3L532.3 696.6L534.3 699.3 M539.5 699.3L541.5 696.6L543.5 699.3L545.5 696.6L547.5 699.3L549.5 696.6L551.5 699.3L553.5 696.6L555.5 699.3L557.5 696.6L559.5 699.3L561.5 696.6L563.5 699.3L565.5 696.6 M576.2 699.3L578.2 696.6L580.2 699.3L582.2 696.6L584.2 699.3L586.2 696.6L588.2 699.3L590.2 696.6L592.2 699.3L594.2 696.6L596.2 699.3L598.2 696.6L600.2 699.3L602.2 696.6L604.2 699.3L606.2 696.6L608.2 699.3L610.2 696.6L612.2 699.3L614.2 696.6L616.2 699.3L618.2 696.6L620.2 699.3L622.2 696.6L624.2 699.3L626.2 696.6L628.2 699.3L630.2 696.6L632.2 699.3L634.2 696.6 M716.2 699.3L718.2 696.6L720.2 699.3L722.2 696.6L724.2 699.3L726.2 696.6L728.2 699.3L730.2 696.6L732.2 699.3L734.2 696.6L736.2 699.3L738.2 696.6L740.2 699.3L742.2 696.6L744.2 699.3L746.2 696.6L748.2 699.3 M759.5 699.3L761.5 696.6L763.5 699.3L765.5 696.6L767.5 699.3L769.5 696.6L771.5 699.3L773.5 696.6L775.5 699.3L777.5 696.6L779.5 699.3L781.5 696.6L783.5 699.3L785.5 696.6L787.5 699.3L789.5 696.6L791.5 699.3L793.5 696.6L795.5 699.3L797.5 696.6L799.5 699.3L801.5 696.6L803.5 699.3L805.5 696.6L807.5 699.3L809.5 696.6L811.5 699.3L813.5 696.6L815.5 699.3L817.5 696.6L819.5 699.3L821.5 696.6L823.5 699.3L825.5 696.6 M831.2 699.3L833.2 696.6L835.2 699.3L837.2 696.6L839.2 699.3L841.2 696.6L843.2 699.3L845.2 696.6L847.2 699.3L849.2 696.6L851.2 699.3L853.2 696.6L855.2 699.3L857.2 696.6L859.2 699.3L861.2 696.6L863.2 699.3L865.2 696.6L867.2 699.3L869.2 696.6L871.2 699.3L873.2 696.6L875.2 699.3L877.2 696.6L879.2 699.3L881.2 696.6L883.2 699.3L885.2 696.6L887.2 699.3L889.2 696.6 M913.4 699.3L915.4 696.6L917.4 699.3L919.4 696.6L921.4 699.3L923.4 696.6L925.4 699.3L927.4 696.6L929.4 699.3L931.4 696.6L933.4 699.3L935.4 696.6L937.4 699.3L939.4 696.6L941.4 699.3L943.4 696.6L945.4 699.3L947.4 696.6L949.4 699.3L951.4 696.6L953.4 699.3L955.4 696.6L957.4 699.3L959.4 696.6L961.4 699.3 M966.2 699.3L968.2 696.6L970.2 699.3L972.2 696.6L974.2 699.3L976.2 696.6L978.2 699.3L980.2 696.6L982.2 699.3L984.2 696.6L986.2 699.3L988.2 696.6L990.2 699.3L992.2 696.6L994.2 699.3L996.2 696.6L998.2 699.3 M1004.5 699.3L1006.5 696.6L1008.5 699.3L1010.5 696.6L1012.5 699.3L1014.5 696.6L1016.5 699.3L1018.5 696.6L1020.5 699.3L1022.5 696.6L1024.5 699.3L1026.5 696.6L1028.5 699.3L1030.5 696.6L1032.5 699.3L1034.5 696.6L1036.5 699.3L1038.5 696.6L1040.5 699.3L1042.5 696.6L1044.5 699.3L1046.5 696.6L1048.5 699.3L1050.5 696.6L1052.5 699.3L1054.5 696.6L1056.5 699.3L1058.5 696.6L1060.5 699.3 M1071.2 699.3L1073.2 696.6L1075.2 699.3L1077.2 696.6L1079.2 699.3L1081.2 696.6L1083.2 699.3L1085.2 696.6L1087.2 699.3L1089.2 696.6L1091.2 699.3L1093.2 696.6L1095.2 699.3L1097.2 696.6L1099.2 699.3L1101.2 696.6L1103.2 699.3L1105.2 696.6L1107.2 699.3L1109.2 696.6L1111.2 699.3L1113.2 696.6L1115.2 699.3L1117.2 696.6L1119.2 699.3L1121.2 696.6L1123.2 699.3L1125.2 696.6L1127.2 699.3L1129.2 696.6L1131.2 699.3L1133.2 696.6L1135.2 699.3L1137.2 696.6L1139.2 699.3L1141.2 696.6L1143.2 699.3L1145.2 696.6L1147.2 699.3L1149.2 696.6L1151.2 699.3L1153.2 696.6L1155.2 699.3L1157.2 696.6L1159.2 699.3L1161.2 696.6L1163.2 699.3L1165.2 696.6L1167.2 699.3L1169.2 696.6 M399.0 722.3L401.0 719.6L403.0 722.3L405.0 719.6L407.0 722.3L409.0 719.6L411.0 722.3L413.0 719.6L415.0 722.3 M419.6 722.3L421.6 719.6L423.6 722.3L425.6 719.6L427.6 722.3L429.6 719.6L431.6 722.3L433.6 719.6L435.6 722.3L437.6 719.6L439.6 722.3L441.6 719.6L443.6 722.3L445.6 719.6L447.6 722.3L449.6 719.6L451.6 722.3L453.6 719.6L455.6 722.3L457.6 719.6L459.6 722.3L461.6 719.6L463.6 722.3L465.6 719.6L467.6 722.3L469.6 719.6L471.6 722.3L473.6 719.6L475.6 722.3L477.6 719.6L479.6 722.3L481.6 719.6L483.6 722.3 M489.0 722.3L491.0 719.6L493.0 722.3L495.0 719.6L497.0 722.3L499.0 719.6L501.0 722.3L503.0 719.6L505.0 722.3L507.0 719.6L509.0 722.3L511.0 719.6L513.0 722.3L515.0 719.6L517.0 722.3L519.0 719.6L521.0 722.3 M532.3 722.3L534.3 719.6L536.3 722.3L538.3 719.6L540.3 722.3L542.3 719.6L544.3 722.3L546.3 719.6L548.3 722.3L550.3 719.6L552.3 722.3L554.3 719.6L556.3 722.3L558.3 719.6L560.3 722.3L562.3 719.6L564.3 722.3L566.3 719.6L568.3 722.3L570.3 719.6L572.3 722.3L574.3 719.6L576.3 722.3 M581.7 722.3L583.7 719.6L585.7 722.3L587.7 719.6L589.7 722.3L591.7 719.6L593.7 722.3L595.7 719.6L597.7 722.3L599.7 719.6L601.7 722.3L603.7 719.6L605.7 722.3L607.7 719.6L609.7 722.3L611.7 719.6L613.7 722.3L615.7 719.6L617.7 722.3L619.7 719.6L621.7 722.3L623.7 719.6L625.7 722.3L627.7 719.6L629.7 722.3L631.7 719.6L633.7 722.3L635.7 719.6L637.7 722.3L639.7 719.6L641.7 722.3L643.7 719.6L645.7 722.3L647.7 719.6L649.7 722.3 M675.1 722.3L677.1 719.6L679.1 722.3L681.1 719.6L683.1 722.3L685.1 719.6L687.1 722.3L689.1 719.6L691.1 722.3L693.1 719.6L695.1 722.3L697.1 719.6L699.1 722.3L701.1 719.6L703.1 722.3L705.1 719.6L707.1 722.3 M713.4 722.3L715.4 719.6L717.4 722.3L719.4 719.6L721.4 722.3L723.4 719.6L725.4 722.3L727.4 719.6L729.4 722.3L731.4 719.6L733.4 722.3L735.4 719.6L737.4 722.3L739.4 719.6L741.4 722.3L743.4 719.6L745.4 722.3L747.4 719.6L749.4 722.3L751.4 719.6L753.4 722.3L755.4 719.6L757.4 722.3L759.4 719.6L761.4 722.3L763.4 719.6L765.4 722.3L767.4 719.6L769.4 722.3L771.4 719.6L773.4 722.3L775.4 719.6L777.4 722.3L779.4 719.6L781.4 722.3L783.4 719.6L785.4 722.3L787.4 719.6L789.4 722.3L791.4 719.6L793.4 722.3L795.4 719.6L797.4 722.3L799.4 719.6L801.4 722.3L803.4 719.6L805.4 722.3L807.4 719.6L809.4 722.3L811.4 719.6L813.4 722.3L815.4 719.6L817.4 722.3L819.4 719.6L821.4 722.3L823.4 719.6 M828.4 722.3L830.4 719.6L832.4 722.3L834.4 719.6L836.4 722.3L838.4 719.6L840.4 722.3L842.4 719.6L844.4 722.3L846.4 719.6L848.4 722.3L850.4 719.6L852.4 722.3L854.4 719.6L856.4 722.3L858.4 719.6L860.4 722.3L862.4 719.6L864.4 722.3L866.4 719.6L868.4 722.3L870.4 719.6L872.4 722.3L874.4 719.6L876.4 722.3L878.4 719.6L880.4 722.3L882.4 719.6L884.4 722.3L886.4 719.6L888.4 722.3L890.4 719.6L892.4 722.3L894.4 719.6 M925.6 722.3L927.6 719.6L929.6 722.3L931.6 719.6L933.6 722.3L935.6 719.6L937.6 722.3L939.6 719.6L941.6 722.3L943.6 719.6L945.6 722.3L947.6 719.6L949.6 722.3L951.6 719.6L953.6 722.3L955.6 719.6L957.6 722.3L959.6 719.6L961.6 722.3L963.6 719.6 M969.5 722.3L971.5 719.6L973.5 722.3L975.5 719.6L977.5 722.3L979.5 719.6L981.5 722.3L983.5 719.6L985.5 722.3L987.5 719.6L989.5 722.3L991.5 719.6L993.5 722.3L995.5 719.6L997.5 722.3L999.5 719.6L1001.5 722.3L1003.5 719.6L1005.5 722.3L1007.5 719.6L1009.5 722.3L1011.5 719.6L1013.5 722.3L1015.5 719.6L1017.5 722.3L1019.5 719.6 M1030.6 722.3L1032.6 719.6L1034.6 722.3L1036.6 719.6L1038.6 722.3L1040.6 719.6L1042.6 722.3L1044.6 719.6L1046.6 722.3L1048.6 719.6L1050.6 722.3L1052.6 719.6L1054.6 722.3L1056.6 719.6L1058.6 722.3L1060.6 719.6L1062.6 722.3L1064.6 719.6L1066.6 722.3L1068.6 719.6L1070.6 722.3L1072.6 719.6L1074.6 722.3L1076.6 719.6L1078.6 722.3L1080.6 719.6L1082.6 722.3L1084.6 719.6L1086.6 722.3L1088.6 719.6L1090.6 722.3L1092.6 719.6L1094.6 722.3L1096.6 719.6L1098.6 722.3L1100.6 719.6L1102.6 722.3L1104.6 719.6L1106.6 722.3L1108.6 719.6L1110.6 722.3L1112.6 719.6L1114.6 722.3L1116.6 719.6L1118.6 722.3 M1124.5 722.3L1126.5 719.6L1128.5 722.3L1130.5 719.6L1132.5 722.3L1134.5 719.6L1136.5 722.3L1138.5 719.6L1140.5 722.3 M399.0 745.3L401.0 742.6L403.0 745.3L405.0 742.6L407.0 745.3L409.0 742.6L411.0 745.3L413.0 742.6L415.0 745.3L417.0 742.6L419.0 745.3L421.0 742.6L423.0 745.3L425.0 742.6L427.0 745.3L429.0 742.6L431.0 745.3L433.0 742.6L435.0 745.3L437.0 742.6L439.0 745.3L441.0 742.6L443.0 745.3L445.0 742.6L447.0 745.3 M451.8 745.3L453.8 742.6L455.8 745.3L457.8 742.6L459.8 745.3L461.8 742.6L463.8 745.3L465.8 742.6L467.8 745.3L469.8 742.6 M480.7 745.3L482.7 742.6L484.7 745.3L486.7 742.6L488.7 745.3L490.7 742.6L492.7 745.3L494.7 742.6L496.7 745.3L498.7 742.6L500.7 745.3L502.7 742.6L504.7 745.3L506.7 742.6L508.7 745.3L510.7 742.6L512.7 745.3L514.7 742.6L516.7 745.3L518.7 742.6L520.7 745.3L522.7 742.6L524.7 745.3L526.7 742.6L528.7 745.3L530.7 742.6L532.7 745.3L534.7 742.6L536.7 745.3L538.7 742.6L540.7 745.3L542.7 742.6L544.7 745.3 M550.1 745.3L552.1 742.6L554.1 745.3L556.1 742.6L558.1 745.3L560.1 742.6L562.1 745.3L564.1 742.6L566.1 745.3L568.1 742.6L570.1 745.3L572.1 742.6L574.1 745.3L576.1 742.6L578.1 745.3L580.1 742.6L582.1 745.3L584.1 742.6L586.1 745.3L588.1 742.6L590.1 745.3L592.1 742.6L594.1 745.3L596.1 742.6L598.1 745.3L600.1 742.6L602.1 745.3L604.1 742.6L606.1 745.3L608.1 742.6L610.1 745.3L612.1 742.6L614.1 745.3L616.1 742.6 M662.9 745.3L664.9 742.6L666.9 745.3L668.9 742.6L670.9 745.3L672.9 742.6L674.9 745.3L676.9 742.6L678.9 745.3L680.9 742.6L682.9 745.3L684.9 742.6L686.9 745.3L688.9 742.6L690.9 745.3L692.9 742.6L694.9 745.3L696.9 742.6L698.9 745.3L700.9 742.6L702.9 745.3L704.9 742.6 M725.1 745.3L727.1 742.6L729.1 745.3L731.1 742.6L733.1 745.3L735.1 742.6L737.1 745.3L739.1 742.6L741.1 745.3L743.1 742.6L745.1 745.3L747.1 742.6L749.1 745.3L751.1 742.6L753.1 745.3L755.1 742.6L757.1 745.3L759.1 742.6L761.1 745.3L763.1 742.6L765.1 745.3L767.1 742.6L769.1 745.3L771.1 742.6L773.1 745.3L775.1 742.6L777.1 745.3L779.1 742.6L781.1 745.3L783.1 742.6L785.1 745.3L787.1 742.6L789.1 745.3L791.1 742.6 M795.6 745.3L797.6 742.6L799.6 745.3L801.6 742.6L803.6 745.3L805.6 742.6L807.6 745.3L809.6 742.6L811.6 745.3L813.6 742.6L815.6 745.3L817.6 742.6L819.6 745.3L821.6 742.6L823.6 745.3 M399.0 791.3L401.0 788.6L403.0 791.3L405.0 788.6L407.0 791.3L409.0 788.6L411.0 791.3L413.0 788.6L415.0 791.3L417.0 788.6L419.0 791.3L421.0 788.6L423.0 791.3L425.0 788.6L427.0 791.3L429.0 788.6L431.0 791.3L433.0 788.6L435.0 791.3L437.0 788.6L439.0 791.3L441.0 788.6L443.0 791.3L445.0 788.6L447.0 791.3L449.0 788.6 M474.6 791.3L476.6 788.6L478.6 791.3L480.6 788.6L482.6 791.3L484.6 788.6L486.6 791.3L488.6 788.6L490.6 791.3L492.6 788.6L494.6 791.3L496.6 788.6L498.6 791.3L500.6 788.6L502.6 791.3L504.6 788.6 M510.7 791.3L512.7 788.6L514.7 791.3L516.7 788.6L518.7 791.3L520.7 788.6L522.7 791.3L524.7 788.6L526.7 791.3L528.7 788.6L530.7 791.3L532.7 788.6L534.7 791.3L536.7 788.6L538.7 791.3L540.7 788.6L542.7 791.3L544.7 788.6L546.7 791.3L548.7 788.6L550.7 791.3L552.7 788.6L554.7 791.3L556.7 788.6L558.7 791.3L560.7 788.6L562.7 791.3L564.7 788.6L566.7 791.3L568.7 788.6L570.7 791.3L572.7 788.6 M583.9 791.3L585.9 788.6L587.9 791.3L589.9 788.6L591.9 791.3L593.9 788.6L595.9 791.3L597.9 788.6L599.9 791.3L601.9 788.6L603.9 791.3L605.9 788.6L607.9 791.3L609.9 788.6L611.9 791.3L613.9 788.6L615.9 791.3L617.9 788.6L619.9 791.3L621.9 788.6L623.9 791.3L625.9 788.6L627.9 791.3L629.9 788.6L631.9 791.3L633.9 788.6L635.9 791.3L637.9 788.6L639.9 791.3L641.9 788.6 M647.8 791.3L649.8 788.6L651.8 791.3L653.8 788.6L655.8 791.3L657.8 788.6L659.8 791.3L661.8 788.6L663.8 791.3L665.8 788.6L667.8 791.3L669.8 788.6L671.8 791.3L673.8 788.6L675.8 791.3L677.8 788.6L679.8 791.3 M685.0 791.3L687.0 788.6L689.0 791.3L691.0 788.6L693.0 791.3L695.0 788.6L697.0 791.3L699.0 788.6L701.0 791.3L703.0 788.6L705.0 791.3L707.0 788.6L709.0 791.3L711.0 788.6L713.0 791.3L715.0 788.6L717.0 791.3L719.0 788.6L721.0 791.3L723.0 788.6L725.0 791.3L727.0 788.6L729.0 791.3L731.0 788.6L733.0 791.3L735.0 788.6L737.0 791.3L739.0 788.6L741.0 791.3L743.0 788.6L745.0 791.3L747.0 788.6L749.0 791.3L751.0 788.6L753.0 791.3L755.0 788.6L757.0 791.3L759.0 788.6L761.0 791.3L763.0 788.6 M837.8 791.3L839.8 788.6L841.8 791.3L843.8 788.6L845.8 791.3L847.8 788.6L849.8 791.3L851.8 788.6L853.8 791.3L855.8 788.6L857.8 791.3L859.8 788.6L861.8 791.3L863.8 788.6L865.8 791.3L867.8 788.6L869.8 791.3L871.8 788.6 M882.2 791.3L884.2 788.6L886.2 791.3L888.2 788.6L890.2 791.3L892.2 788.6L894.2 791.3L896.2 788.6L898.2 791.3L900.2 788.6L902.2 791.3L904.2 788.6L906.2 791.3L908.2 788.6L910.2 791.3L912.2 788.6L914.2 791.3L916.2 788.6L918.2 791.3L920.2 788.6L922.2 791.3L924.2 788.6L926.2 791.3 M945.6 791.3L947.6 788.6L949.6 791.3L951.6 788.6L953.6 791.3L955.6 788.6L957.6 791.3L959.6 788.6L961.6 791.3L963.6 788.6L965.6 791.3L967.6 788.6L969.6 791.3L971.6 788.6L973.6 791.3L975.6 788.6L977.6 791.3L979.6 788.6L981.6 791.3L983.6 788.6L985.6 791.3L987.6 788.6L989.6 791.3L991.6 788.6L993.6 791.3L995.6 788.6 M1001.7 791.3L1003.7 788.6L1005.7 791.3L1007.7 788.6L1009.7 791.3L1011.7 788.6L1013.7 791.3L1015.7 788.6L1017.7 791.3L1019.7 788.6L1021.7 791.3L1023.7 788.6L1025.7 791.3L1027.7 788.6L1029.7 791.3L1031.7 788.6L1033.7 791.3L1035.7 788.6L1037.7 791.3L1039.7 788.6L1041.7 791.3L1043.7 788.6L1045.7 791.3L1047.7 788.6L1049.7 791.3L1051.7 788.6L1053.7 791.3L1055.7 788.6L1057.7 791.3L1059.7 788.6L1061.7 791.3L1063.7 788.6L1065.7 791.3L1067.7 788.6L1069.7 791.3L1071.7 788.6L1073.7 791.3L1075.7 788.6L1077.7 791.3L1079.7 788.6L1081.7 791.3L1083.7 788.6L1085.7 791.3L1087.7 788.6L1089.7 791.3L1091.7 788.6L1093.7 791.3L1095.7 788.6L1097.7 791.3L1099.7 788.6L1101.7 791.3L1103.7 788.6L1105.7 791.3L1107.7 788.6L1109.7 791.3L1111.7 788.6 M399.0 814.3L401.0 811.6L403.0 814.3L405.0 811.6L407.0 814.3L409.0 811.6L411.0 814.3L413.0 811.6L415.0 814.3L417.0 811.6L419.0 814.3L421.0 811.6L423.0 814.3L425.0 811.6L427.0 814.3L429.0 811.6L431.0 814.3L433.0 811.6L435.0 814.3L437.0 811.6L439.0 814.3L441.0 811.6L443.0 814.3L445.0 811.6L447.0 814.3L449.0 811.6L451.0 814.3L453.0 811.6L455.0 814.3L457.0 811.6L459.0 814.3L461.0 811.6L463.0 814.3L465.0 811.6L467.0 814.3L469.0 811.6L471.0 814.3 M535.6 814.3L537.6 811.6L539.6 814.3L541.6 811.6L543.6 814.3L545.6 811.6L547.6 814.3L549.6 811.6L551.6 814.3L553.6 811.6L555.6 814.3L557.6 811.6L559.6 814.3L561.6 811.6L563.6 814.3L565.6 811.6L567.6 814.3L569.6 811.6L571.6 814.3L573.6 811.6L575.6 814.3L577.6 811.6L579.6 814.3L581.6 811.6L583.6 814.3L585.6 811.6L587.6 814.3L589.6 811.6L591.6 814.3L593.6 811.6L595.6 814.3L597.6 811.6L599.6 814.3L601.6 811.6L603.6 814.3L605.6 811.6L607.6 814.3L609.6 811.6L611.6 814.3 M616.2 814.3L618.2 811.6L620.2 814.3L622.2 811.6L624.2 814.3L626.2 811.6L628.2 814.3L630.2 811.6L632.2 814.3L634.2 811.6L636.2 814.3L638.2 811.6L640.2 814.3L642.2 811.6 M651.7 814.3L653.7 811.6L655.7 814.3L657.7 811.6L659.7 814.3L661.7 811.6L663.7 814.3L665.7 811.6L667.7 814.3L669.7 811.6L671.7 814.3L673.7 811.6L675.7 814.3L677.7 811.6L679.7 814.3L681.7 811.6L683.7 814.3L685.7 811.6L687.7 814.3L689.7 811.6L691.7 814.3L693.7 811.6L695.7 814.3L697.7 811.6L699.7 814.3L701.7 811.6L703.7 814.3L705.7 811.6L707.7 814.3L709.7 811.6L711.7 814.3L713.7 811.6L715.7 814.3L717.7 811.6L719.7 814.3L721.7 811.6L723.7 814.3L725.7 811.6L727.7 814.3 M767.3 814.3L769.3 811.6L771.3 814.3L773.3 811.6L775.3 814.3L777.3 811.6L779.3 814.3L781.3 811.6L783.3 814.3L785.3 811.6L787.3 814.3L789.3 811.6L791.3 814.3L793.3 811.6L795.3 814.3L797.3 811.6L799.3 814.3L801.3 811.6L803.3 814.3 M807.8 814.3L809.8 811.6L811.8 814.3L813.8 811.6L815.8 814.3L817.8 811.6L819.8 814.3L821.8 811.6L823.8 814.3L825.8 811.6L827.8 814.3L829.8 811.6L831.8 814.3L833.8 811.6L835.8 814.3L837.8 811.6L839.8 814.3 M846.2 814.3L848.2 811.6L850.2 814.3L852.2 811.6L854.2 814.3L856.2 811.6L858.2 814.3L860.2 811.6L862.2 814.3L864.2 811.6L866.2 814.3L868.2 811.6L870.2 814.3L872.2 811.6L874.2 814.3L876.2 811.6L878.2 814.3 M949.5 814.3L951.5 811.6L953.5 814.3L955.5 811.6L957.5 814.3L959.5 811.6L961.5 814.3L963.5 811.6L965.5 814.3L967.5 811.6L969.5 814.3L971.5 811.6L973.5 814.3L975.5 811.6L977.5 814.3L979.5 811.6L981.5 814.3L983.5 811.6L985.5 814.3L987.5 811.6L989.5 814.3L991.5 811.6L993.5 814.3L995.5 811.6L997.5 814.3L999.5 811.6L1001.5 814.3L1003.5 811.6L1005.5 814.3L1007.5 811.6 M1036.1 814.3L1038.1 811.6L1040.1 814.3L1042.1 811.6L1044.1 814.3L1046.1 811.6L1048.1 814.3L1050.1 811.6L1052.1 814.3L1054.1 811.6L1056.1 814.3L1058.1 811.6L1060.1 814.3L1062.1 811.6 M1096.7 814.3L1098.7 811.6L1100.7 814.3L1102.7 811.6L1104.7 814.3L1106.7 811.6L1108.7 814.3L1110.7 811.6L1112.7 814.3L1114.7 811.6L1116.7 814.3L1118.7 811.6L1120.7 814.3L1122.7 811.6L1124.7 814.3L1126.7 811.6L1128.7 814.3L1130.7 811.6L1132.7 814.3L1134.7 811.6L1136.7 814.3L1138.7 811.6L1140.7 814.3L1142.7 811.6 M399.0 837.3L401.0 834.6L403.0 837.3L405.0 834.6L407.0 837.3L409.0 834.6L411.0 837.3L413.0 834.6L415.0 837.3L417.0 834.6L419.0 837.3L421.0 834.6L423.0 837.3L425.0 834.6L427.0 837.3L429.0 834.6L431.0 837.3L433.0 834.6L435.0 837.3L437.0 834.6L439.0 837.3L441.0 834.6L443.0 837.3L445.0 834.6L447.0 837.3L449.0 834.6L451.0 837.3L453.0 834.6L455.0 837.3 M459.5 837.3L461.5 834.6L463.5 837.3L465.5 834.6L467.5 837.3L469.5 834.6L471.5 837.3L473.5 834.6L475.5 837.3L477.5 834.6L479.5 837.3L481.5 834.6L483.5 837.3L485.5 834.6L487.5 837.3L489.5 834.6L491.5 837.3L493.5 834.6L495.5 837.3L497.5 834.6L499.5 837.3L501.5 834.6L503.5 837.3L505.5 834.6L507.5 837.3L509.5 834.6 M514.6 837.3L516.6 834.6L518.6 837.3L520.6 834.6L522.6 837.3L524.6 834.6L526.6 837.3L528.6 834.6L530.6 837.3L532.6 834.6L534.6 837.3L536.6 834.6L538.6 837.3L540.6 834.6L542.6 837.3L544.6 834.6L546.6 837.3L548.6 834.6 M559.0 837.3L561.0 834.6L563.0 837.3L565.0 834.6L567.0 837.3L569.0 834.6L571.0 837.3L573.0 834.6L575.0 837.3L577.0 834.6L579.0 837.3L581.0 834.6L583.0 837.3 M588.4 837.3L590.4 834.6L592.4 837.3L594.4 834.6L596.4 837.3L598.4 834.6L600.4 837.3L602.4 834.6L604.4 837.3L606.4 834.6L608.4 837.3L610.4 834.6L612.4 837.3L614.4 834.6L616.4 837.3L618.4 834.6L620.4 837.3L622.4 834.6L624.4 837.3L626.4 834.6L628.4 837.3L630.4 834.6L632.4 837.3L634.4 834.6L636.4 837.3L638.4 834.6 M682.8 837.3L684.8 834.6L686.8 837.3L688.8 834.6L690.8 837.3L692.8 834.6L694.8 837.3L696.8 834.6L698.8 837.3L700.8 834.6L702.8 837.3L704.8 834.6L706.8 837.3L708.8 834.6L710.8 837.3L712.8 834.6L714.8 837.3L716.8 834.6L718.8 837.3L720.8 834.6L722.8 837.3L724.8 834.6L726.8 837.3L728.8 834.6L730.8 837.3L732.8 834.6L734.8 837.3L736.8 834.6L738.8 837.3L740.8 834.6L742.8 837.3L744.8 834.6L746.8 837.3L748.8 834.6 M778.9 837.3L780.9 834.6L782.9 837.3L784.9 834.6L786.9 837.3L788.9 834.6L790.9 837.3L792.9 834.6L794.9 837.3L796.9 834.6L798.9 837.3L800.9 834.6L802.9 837.3L804.9 834.6L806.9 837.3L808.9 834.6L810.9 837.3L812.9 834.6L814.9 837.3L816.9 834.6L818.9 837.3L820.9 834.6 M827.3 837.3L829.3 834.6L831.3 837.3L833.3 834.6L835.3 837.3L837.3 834.6L839.3 837.3L841.3 834.6L843.3 837.3L845.3 834.6L847.3 837.3L849.3 834.6L851.3 837.3L853.3 834.6L855.3 837.3L857.3 834.6L859.3 837.3 M865.6 837.3L867.6 834.6L869.6 837.3L871.6 834.6L873.6 837.3L875.6 834.6L877.6 837.3L879.6 834.6L881.6 837.3L883.6 834.6L885.6 837.3L887.6 834.6L889.6 837.3L891.6 834.6L893.6 837.3L895.6 834.6L897.6 837.3L899.6 834.6L901.6 837.3L903.6 834.6L905.6 837.3L907.6 834.6L909.6 837.3L911.6 834.6L913.6 837.3L915.6 834.6L917.6 837.3L919.6 834.6L921.6 837.3L923.6 834.6L925.6 837.3L927.6 834.6 M963.9 837.3L965.9 834.6L967.9 837.3L969.9 834.6L971.9 837.3L973.9 834.6L975.9 837.3L977.9 834.6L979.9 837.3L981.9 834.6L983.9 837.3L985.9 834.6L987.9 837.3L989.9 834.6L991.9 837.3L993.9 834.6L995.9 837.3 M1002.3 837.3L1004.3 834.6L1006.3 837.3L1008.3 834.6L1010.3 837.3L1012.3 834.6L1014.3 837.3L1016.3 834.6L1018.3 837.3L1020.3 834.6L1022.3 837.3L1024.3 834.6L1026.3 837.3L1028.3 834.6L1030.3 837.3L1032.3 834.6L1034.3 837.3L1036.3 834.6L1038.3 837.3L1040.3 834.6L1042.3 837.3L1044.3 834.6L1046.3 837.3L1048.3 834.6L1050.3 837.3L1052.3 834.6L1054.3 837.3L1056.3 834.6L1058.3 837.3L1060.3 834.6L1062.3 837.3L1064.3 834.6L1066.3 837.3L1068.3 834.6L1070.3 837.3L1072.3 834.6L1074.3 837.3 M1079.5 837.3L1081.5 834.6L1083.5 837.3L1085.5 834.6L1087.5 837.3L1089.5 834.6L1091.5 837.3L1093.5 834.6L1095.5 837.3L1097.5 834.6L1099.5 837.3L1101.5 834.6L1103.5 837.3L1105.5 834.6L1107.5 837.3L1109.5 834.6L1111.5 837.3L1113.5 834.6 M1118.9 837.3L1120.9 834.6L1122.9 837.3L1124.9 834.6L1126.9 837.3L1128.9 834.6L1130.9 837.3L1132.9 834.6L1134.9 837.3L1136.9 834.6L1138.9 837.3L1140.9 834.6L1142.9 837.3L1144.9 834.6L1146.9 837.3L1148.9 834.6L1150.9 837.3L1152.9 834.6L1154.9 837.3L1156.9 834.6L1158.9 837.3L1160.9 834.6L1162.9 837.3L1164.9 834.6L1166.9 837.3L1168.9 834.6L1170.9 837.3L1172.9 834.6" fill="none" stroke="#dc4050" stroke-width="1.35"/><path d="M456.2 630.3L458.2 627.6L460.2 630.3L462.2 627.6L464.2 630.3" fill="none" stroke="#3050d0" stroke-width="1.15"/></svg>
 </div>
</div>
<div id="status" class="a"></div>
<div id="taskbar" class="a"></div>

<svg id="ov" style="left:0;top:0" width="1600" height="900" viewBox="0 0 1600 900">
<!-- ===== title bar ===== -->
<g fill="none" stroke="#fff" stroke-width="1.8">
 <rect x="27.2" y="11.9" width="14.6" height="15" />
 <path d="M66.5 13.2 L62.2 17.6 L66.5 22" stroke-width="2.2" stroke-linejoin="miter"/>
 <path d="M62.8 17.6 H73 A5 5 0 0 1 73 27.6 H71" stroke-width="2.2"/>
 <path d="M119 12.8 L123.3 17.2 L119 21.6" stroke-width="2.2"/>
 <path d="M122.7 17.2 H112.5 A5 5 0 0 0 112.5 27.2 H114.5" stroke-width="2.2"/>
 <circle cx="145.6" cy="15.2" r="3.6" stroke-width="1.7"/>
 <rect x="1390.6" y="12.6" width="15" height="12" stroke-width="1.3"/>
 <path d="M1390.6 15.8 H1405.6 M1398 16 V24.5 M1395 19.5 L1398 16.8 L1401 19.5" stroke-width="1.3"/>
 <path d="M1448.7 18.8 H1462.2" stroke-width="1.2"/>
 <rect x="1506" y="15.6" width="10.2" height="9.2" stroke-width="1.2"/>
 <path d="M1508.8 15.6 V12.8 H1519.6 V22 H1516.2" stroke-width="1.2"/>
 <path d="M1563.6 12.8 L1576.8 24.8 M1576.8 12.8 L1563.6 24.8" stroke-width="1.3"/>
 <!-- lightbulb -->
 <path d="M714.6 64 C714.6 59.5 710.8 57.5 710.8 55.2 A6.4 6.4 0 1 1 723.6 55.2 C723.6 57.5 719.6 59.5 719.6 64" stroke-width="1.5"/>
 <!-- share person -->
 <circle cx="1480.8" cy="57.2" r="5.4" stroke-width="1.4"/>
 <path d="M1472.3 69.8 C1473 65 1476.5 62.6 1479.5 62.6" stroke-width="1.4"/>
 <path d="M1486 62 V70.6 M1481.7 66.3 H1490.4" stroke-width="1.3"/>
 <!-- comment -->
 <path d="M1561.8 53 H1579.6 V64.8 H1568.5 L1564.3 68.5 V64.8 H1561.8 Z" stroke-width="1.3"/>
</g>
<g fill="#fff">
 <rect x="28" y="20" width="13" height="7.5"/>
 <rect x="30.8" y="23" width="6.4" height="2.4" fill="#2b579a"/>
 <path d="M88.2 19 H94.3 L91.25 21.6 Z"/>
 <path d="M163 18.2 H169.4 L166.2 21.4 Z"/>
 <path d="M188.6 18.4 H194 L191.3 21.5 Z"/>
 <rect x="188.6" y="15.3" width="5.4" height="1.6"/>
 <!-- touch hand -->
 <path d="M144.6 15 H146.6 V21.5 C148.5 21 151.5 21.7 152.6 23.3 C153.2 25 153 27.2 152.2 29 H145.8 L140.5 23.2 C141.3 22.3 142.6 22.5 144.6 24 Z"/>
 <rect x="714.2" y="64.2" width="5.6" height="3.2"/>
 <rect x="714.8" y="68.6" width="4.4" height="1" opacity="0.6"/>
</g>
<!-- ===== ribbon: separators & launchers ===== -->
<g fill="#d8d8d8">
 <rect x="181.2" y="82" width="1.2" height="103"/>
 <rect x="470" y="82" width="1.2" height="103"/>
 <rect x="711.2" y="82" width="1.2" height="103"/>
 <rect x="1462.8" y="82" width="1.2" height="103"/>
 <rect x="1551.2" y="82" width="1.2" height="103"/>
 <rect x="392.8" y="95" width="1" height="19.5"/>
 <rect x="436.2" y="95" width="1" height="19.5"/>
 <rect x="351.5" y="132.7" width="1" height="16.5"/>
 <rect x="586" y="95.4" width="1" height="18.6"/>
 <rect x="645" y="95.4" width="1" height="18.6"/>
 <rect x="679" y="95.4" width="1" height="18.6" opacity="0.5"/>
 <rect x="578.2" y="130" width="1" height="24"/>
 <rect x="621.3" y="130" width="1" height="24"/>
</g>
<g id="launch" fill="none" stroke="#666" stroke-width="1">
 <path d="M168.7 181.5 V175.9 H175" stroke="#999"/>
 <path d="M171.5 178.6 L175.2 182" stroke="#555" stroke-width="1.3"/>
 <path d="M456.2 181.5 V175.9 H462.5" stroke="#999"/>
 <path d="M459 178.6 L462.7 182" stroke="#555" stroke-width="1.3"/>
 <path d="M698.6 181.5 V175.9 H704.9" stroke="#999"/>
 <path d="M701.4 178.6 L705.1 182" stroke="#555" stroke-width="1.3"/>
 <path d="M1449.6 181.5 V175.9 H1455.9" stroke="#999"/>
 <path d="M1452.4 178.6 L1456.1 182" stroke="#555" stroke-width="1.3"/>
</g>
<!-- ===== clipboard ===== -->
<rect x="13.5" y="90.5" width="27.5" height="30.6" fill="#f2c27b"/>
<path d="M18.8 90.9 H35.7 V94.6 H18.8 Z" fill="#5c6168"/>
<path d="M22.8 91 V87.8 Q22.8 86.4 24.2 86.4 H29.4 Q30.8 86.4 30.8 87.8 V91 H28.6 V88.6 H25 V91 Z" fill="#5c6168"/>
<path d="M30.6 100.9 H40.6 L47 107 V123.6 H30.6 Z" fill="#fff" stroke="#8a8a8a" stroke-width="1"/>
<path d="M40.6 100.9 V107 H47" fill="none" stroke="#8a8a8a" stroke-width="1"/>
<path d="M23.8 153.6 H30.4 L27.1 157.6 Z" fill="#444"/>
<g fill="none" stroke="#a8a8a8" stroke-width="1.3">
 <circle cx="58.9" cy="101" r="2.9"/>
 <circle cx="68.1" cy="101" r="2.9"/>
 <path d="M60.6 98.6 L69.5 87 M66.4 98.6 L57.5 87"/>
 <path d="M56.3 114.5 H63 L66 117.5 V126 H56.3 Z M58 118 H62 M58 120.5 H63 M58 123 H62" stroke-width="1.1"/>
 <path d="M63 120.2 H69 L72 123.2 V132.3 H63 Z" fill="#f0f0f0" stroke-width="1.1"/>
</g>
<path d="M63.5 150 L71.5 142.5 L74 145 L66 152.5 Z" fill="#4a4f55"/>
<path d="M55 152 L62.5 148.5 L67 153 L60.8 158.5 Z" fill="#e8c26e"/>
<!-- ===== font ===== -->
<rect x="185.9" y="91.9" width="101.8" height="24.5" fill="#fff" stroke="#c8c8c8" stroke-width="1"/>
<rect x="287.7" y="91.9" width="51.5" height="24.5" fill="#fff" stroke="#c8c8c8" stroke-width="1"/>
<g fill="#444">
 <path d="M278.6 102.2 H283.6 L281.1 105 Z"/>
 <path d="M329.6 102.2 H334.6 L332.1 105 Z"/>
 <path d="M355 98.7 L357.2 96.2 L359.5 98.7 Z" fill="#555b66"/>
 <path d="M380 95.9 H385 L382.5 98.8 Z" fill="#3d6aa8"/>
 <path d="M423.8 104 H428.8 L426.3 106.6 Z"/>
 <path d="M264 141.3 H269 L266.5 143.9 Z"/>
 <path d="M381.9 140.8 H387.1 L384.5 143.6 Z"/>
 <path d="M419.7 140.8 H424.7 L422.2 143.6 Z"/>
 <path d="M456 140.8 H461 L458.5 143.6 Z"/>
</g>
<path d="M451.8 110.5 L460.5 101.5 L463.8 104.8 L455 113.7 Z" fill="#e5637e"/>
<path d="M451.8 110.5 L455 113.7" stroke="#c44d66" stroke-width="1"/>
<rect x="242.6" y="148.6" width="11" height="1" fill="#888"/>
<rect x="274.5" y="142.8" width="20.5" height="1" fill="#444"/>
<text x="360.8" y="148.3" font-family="Liberation Sans" font-size="19.6" font-weight="700" fill="#fff" stroke="#5b8fd5" stroke-width="1.2" textLength="14.2" lengthAdjust="spacingAndGlyphs">A</text>
<rect x="392.8" y="147.4" width="21.7" height="3.4" fill="#f0f020"/>
<path d="M403 143.5 L411.3 134.4 L414.2 137 L405.8 146 Z" fill="#505050"/>
<path d="M401.8 146.2 L403 143.5 L405.8 146 Z" fill="#222"/>
<rect x="431" y="147.4" width="20" height="3.4" fill="#e4000f"/>
<!-- ===== paragraph ===== -->
<g fill="none">
<path d="M484 96.9 H496" stroke="#555" stroke-width="1.3"/><path d="M484 103.7 H496" stroke="#bcbcbc" stroke-width="1.3"/><path d="M484 110.3 H496" stroke="#555" stroke-width="1.3"/><path d="M520.1 96.9 H532.5" stroke="#555" stroke-width="1.3"/><path d="M520.1 103.7 H532.5" stroke="#bcbcbc" stroke-width="1.3"/><path d="M520.1 110.3 H532.5" stroke="#555" stroke-width="1.3"/><path d="M555.8 96.9 H569.2" stroke="#555" stroke-width="1.3"/><path d="M560.7 103.7 H569" stroke="#bcbcbc" stroke-width="1.3"/><path d="M564 110.3 H569.6" stroke="#555" stroke-width="1.3"/><path d="M595.1 95.4 H613.3" stroke="#555" stroke-width="1.3"/><path d="M604.3 98.6 H613.3" stroke="#bcbcbc" stroke-width="1.3"/><path d="M604.3 101.9 H613.3" stroke="#555" stroke-width="1.3"/><path d="M604.3 105.2 H613.3" stroke="#555" stroke-width="1.3"/><path d="M604.3 108.4 H613.3" stroke="#bcbcbc" stroke-width="1.3"/><path d="M595.1 111.7 H613.3" stroke="#555" stroke-width="1.3"/><path d="M620 95.4 H638.6" stroke="#555" stroke-width="1.3"/><path d="M629.4 98.6 H638.6" stroke="#bcbcbc" stroke-width="1.3"/><path d="M629.4 101.9 H638.6" stroke="#555" stroke-width="1.3"/><path d="M629.4 105.2 H638.6" stroke="#555" stroke-width="1.3"/><path d="M629.4 108.4 H638.6" stroke="#bcbcbc" stroke-width="1.3"/><path d="M620 111.7 H638.6" stroke="#555" stroke-width="1.3"/><rect x="474" y="129.1" width="24.8" height="25.4" fill="#c6c6c6" stroke="none"/><path d="M478.2 132.9 H495" stroke="#555" stroke-width="1.3"/><path d="M478.2 136.2 H491.6" stroke="#bcbcbc" stroke-width="1.3"/><path d="M478.2 139.4 H495" stroke="#555" stroke-width="1.3"/><path d="M478.2 142.8 H491.6" stroke="#555" stroke-width="1.3"/><path d="M478.2 146.1 H495" stroke="#bcbcbc" stroke-width="1.3"/><path d="M478.2 149.4 H491.6" stroke="#555" stroke-width="1.3"/><path d="M503.3 132.9 H519.8" stroke="#555" stroke-width="1.3"/><path d="M506 136.2 H517.2" stroke="#bcbcbc" stroke-width="1.3"/><path d="M503.3 139.4 H519.8" stroke="#555" stroke-width="1.3"/><path d="M506 142.8 H517.2" stroke="#555" stroke-width="1.3"/><path d="M503.3 146.1 H519.8" stroke="#bcbcbc" stroke-width="1.3"/><path d="M506 149.4 H517.2" stroke="#555" stroke-width="1.3"/><path d="M528.4 132.9 H544.9" stroke="#555" stroke-width="1.3"/><path d="M531.4 136.2 H544.9" stroke="#bcbcbc" stroke-width="1.3"/><path d="M528.4 139.4 H544.9" stroke="#555" stroke-width="1.3"/><path d="M531.4 142.8 H544.9" stroke="#555" stroke-width="1.3"/><path d="M528.4 146.1 H544.9" stroke="#bcbcbc" stroke-width="1.3"/><path d="M531.4 149.4 H544.9" stroke="#555" stroke-width="1.3"/><path d="M553.1 132.9 H570" stroke="#555" stroke-width="1.3"/><path d="M553.1 136.2 H570" stroke="#bcbcbc" stroke-width="1.3"/><path d="M553.1 139.4 H570" stroke="#555" stroke-width="1.3"/><path d="M553.1 142.8 H570" stroke="#555" stroke-width="1.3"/><path d="M553.1 146.1 H570" stroke="#bcbcbc" stroke-width="1.3"/><path d="M553.1 149.4 H570" stroke="#555" stroke-width="1.3"/><path d="M594.3 135.8 H604" stroke="#bcbcbc" stroke-width="1.3"/><path d="M594.3 139.4 H604" stroke="#555" stroke-width="1.3"/><path d="M594.3 142.9 H604" stroke="#5d6b5d" stroke-width="1.3"/><path d="M594.3 146.2 H600.5" stroke="#bcbcbc" stroke-width="1.3"/></g>
<g fill="#3e5c8a">
 <circle cx="478.9" cy="96.9" r="1.9"/><circle cx="478.9" cy="103.7" r="1.9"/><circle cx="478.9" cy="110.3" r="1.9"/>
</g>
<g font-family="Liberation Sans" fill="#3e6cb0" font-size="5.2">
 <text x="514.4" y="99">1</text><text x="514.4" y="105.8">2</text><text x="514.4" y="112.5">3</text>
 <text x="550.5" y="99.5">1</text><text x="555" y="105.5" fill="#4a6a9a">a</text><text x="560" y="112" fill="#999">i</text>
</g>
<g fill="#444">
 <path d="M502.2 103.4 H507 L504.6 106.2 Z"/>
 <path d="M539 103.4 H543.8 L541.4 106.2 Z"/>
 <path d="M573.7 103.4 H578.9 L576.3 106.2 Z"/>
 <path d="M608.9 140.6 H614.1 L611.5 143.6 Z"/>
 <path d="M654.6 140.6 H659.5 L657 143.6 Z"/>
 <path d="M691 140.6 H696.6 L693.8 143.6 Z"/>
</g>
<g fill="#2e6fc0">
 <path d="M595.2 103.5 L599.5 99.6 V101.9 H602.8 V105.1 H599.5 V107.4 Z"/>
 <path d="M627.2 103.5 L622.9 99.6 V101.9 H619.6 V105.1 H622.9 V107.4 Z"/>
</g>
<text x="655.2" y="101.6" font-family="Liberation Sans" font-weight="700" font-size="9.2" fill="#3f6cb5" textLength="8" lengthAdjust="spacingAndGlyphs">A</text>
<text x="655.2" y="113" font-family="Liberation Sans" font-weight="700" font-size="10.8" fill="#7036a0" textLength="8" lengthAdjust="spacingAndGlyphs">Z</text>
<path d="M668.3 96 V112.5 M665.3 109.2 L668.3 112.6 L671.3 109.2" fill="none" stroke="#555" stroke-width="1.1"/>
<path d="M693 96 H701.2 M696.2 96 V112.5 M699.8 96 V112.5" fill="none" stroke="#333" stroke-width="1.6"/>
<path d="M696.6 95.3 H693.6 A4.6 4.6 0 0 0 693.6 104.5 H696.6 Z" fill="#333"/>
<!-- line spacing arrow -->
<path d="M589.4 133 V150.2" stroke="#3566b0" stroke-width="1.4"/>
<path d="M586 136.2 L589.4 132.4 L592.8 136.2 Z M586 147 L589.4 150.8 L592.8 147 Z" fill="#3566b0"/>
<!-- shading -->
<rect x="629.3" y="146.4" width="19.5" height="5" fill="#fff" stroke="#9a9a9a" stroke-width="0.9"/>
<path d="M633 138.5 L639.5 132 L646.8 139.3 L640.3 145.8 Z" fill="#fff" stroke="#666" stroke-width="1.1"/>
<path d="M639.2 131.5 V139" stroke="#333" stroke-width="1.2"/>
<path d="M645.5 137 Q648.3 140 647.5 146" fill="none" stroke="#2e6fc0" stroke-width="1.6"/>
<!-- borders -->
<rect x="666.8" y="132.8" width="17.2" height="16.6" fill="#fff" stroke="#aaa" stroke-width="0.9" stroke-dasharray="1.2 1.2"/>
<path d="M675.4 132.4 V149.6 M666.3 149.3 H684.4" stroke="#444" stroke-width="1.2"/>
<path d="M667 141 H684" stroke="#bbb" stroke-width="0.8" stroke-dasharray="1.2 1.5"/>
<!-- ===== styles gallery ===== -->
<rect x="716.9" y="84.6" width="738.8" height="74" fill="#fff" stroke="#d4d4d4" stroke-width="1"/>
<rect x="1439.2" y="85.1" width="16" height="25" fill="#e3e3e3"/>
<path d="M1438.7 84.6 V158.6" stroke="#e2e2e2" stroke-width="1"/>
<path d="M1439.2 110.4 H1455.6 M1439.2 134 H1455.6" stroke="#e8e8e8" stroke-width="1"/>
<path d="M1445.3 97.5 H1450.5" stroke="#bbb" stroke-width="1"/>
<path d="M1445.2 120.6 H1450.6 L1447.9 124 Z M1445.2 146.2 H1450.6 L1447.9 149.2 Z" fill="#555"/>
<path d="M1445.2 143 H1450.6" stroke="#999" stroke-width="0.9"/>
<!-- ===== editing ===== -->
<circle cx="1481.2" cy="91.9" r="5" fill="#fff8d8" stroke="#2f6cb8" stroke-width="1.7"/>
<path d="M1477.6 95.6 L1471.8 101.2" stroke="#2f6cb8" stroke-width="2.2" stroke-linecap="round"/>
<path d="M1528.6 93.6 H1534 L1531.3 96.4 Z M1535 145 H1540.2 L1537.6 147.8 Z" fill="#555"/>
<text x="1469.4" y="121.6" font-family="Liberation Sans" font-size="11.5" fill="#444" textLength="6.6" lengthAdjust="spacingAndGlyphs">a</text>
<text x="1476.2" y="121.6" font-family="Liberation Sans" font-size="11.5" fill="#7a4aa8" textLength="7" lengthAdjust="spacingAndGlyphs">b</text>
<text x="1474" y="129.6" font-family="Liberation Sans" font-size="11.5" fill="#444" textLength="14.4" lengthAdjust="spacingAndGlyphs">ac</text>
<path d="M1471 123.2 V127 H1473.4 M1471.8 125.8 L1473.6 127 L1471.8 128.2" fill="none" stroke="#2f6cb8" stroke-width="1.1"/>
<path d="M1474.2 137.4 V152.2 L1477.5 149 L1480 154.4 L1482.3 153.4 L1479.8 148.2 H1484.6 Z" fill="#fff" stroke="#555" stroke-width="1"/>
<path d="M1579.3 181.2 L1584.6 175.8 L1589.9 181.2" fill="none" stroke="#444" stroke-width="1.5"/>
<!-- ===== scrollbar ===== -->
<rect x="1578.6" y="190" width="21.4" height="632" fill="#dadada"/>
<rect x="1579.5" y="190.5" width="18.8" height="19.6" fill="#fff" stroke="#d0d0d0" stroke-width="0.8"/>
<rect x="1579.5" y="210.5" width="18.8" height="91.5" fill="#fff" stroke="#cfcfcf" stroke-width="0.8"/>
<rect x="1579.5" y="801.3" width="18.8" height="19" fill="#fff" stroke="#d0d0d0" stroke-width="0.8"/>
<path d="M1584.2 203 L1588.9 198 L1593.6 203 Z M1583.9 808.6 H1593.6 L1588.75 813.6 Z" fill="#555"/>
<!-- I-beam -->
<path d="M1149.6 566.6 H1152.6 Q1154.4 566.6 1154.4 568.4 V584.4 Q1154.4 586.2 1152.6 586.2 H1149.6 M1159.2 566.6 H1156.2 Q1154.4 566.6 1154.4 568.4 M1154.4 584.4 Q1154.4 586.2 1156.2 586.2 H1159.2" fill="none" stroke="#111" stroke-width="1.3"/>
<!-- ===== status bar ===== -->
<path d="M173.5 828.6 H189.3 V840.8 H173.5 Z" fill="none" stroke="#a8a8a8" stroke-width="1.1"/>
<path d="M181 828.5 V841.5" stroke="#888" stroke-width="1.2"/>
<path d="M185 832.2 L189.8 838.4 M189.8 832.2 L185 838.4" stroke="#555" stroke-width="1.6"/>
<rect x="1311.6" y="823" width="37" height="26" fill="#d5d5d5"/>
<path d="M1285.6 828.8 H1300.6 V841.4 H1285.6 Z" fill="none" stroke="#777" stroke-width="1.1"/>
<path d="M1288.5 829 V841 M1298 829 V841" stroke="#cfcfcf" stroke-width="1.5"/>
<path d="M1292.8 828.5 V842.5" stroke="#555" stroke-width="1.3" stroke-dasharray="1.3 1"/>
<rect x="1323" y="828.9" width="15" height="14" fill="#f5f5f5" stroke="#707070" stroke-width="1.3"/>
<path d="M1325.5 831.8 H1335.5 M1325.5 836.6 H1335.5 M1325.5 839.8 H1335.5" stroke="#666" stroke-width="1"/>
<path d="M1325.5 834.2 H1335.5" stroke="#aaa" stroke-width="1"/>
<path d="M1360.5 841.5 V828.8 H1374.5 V833" fill="none" stroke="#888" stroke-width="1.1"/>
<rect x="1361.2" y="829.5" width="12.6" height="11.5" fill="#dedede" opacity="0.7"/>
<circle cx="1371.6" cy="839.2" r="4.8" fill="#444" stroke="#f0f0f0" stroke-width="0.9"/>
<path d="M1368.5 840.5 L1371 842.8 M1371.5 836.3 Q1373.5 837 1374.5 835.5" stroke="#eee" stroke-width="1.1" fill="none"/>
<path d="M1391.3 835.6 H1401" stroke="#555" stroke-width="1.8"/>
<path d="M1405 836 H1530" stroke="#c8c8c8" stroke-width="1.2"/>
<rect x="1465.2" y="829.6" width="4.8" height="13.4" fill="#5a5a5a"/>
<path d="M1534.4 835.6 H1545.4 M1539.9 830.1 V841.1" stroke="#444" stroke-width="1.8"/>
<!-- ===== taskbar ===== -->
<rect x="0" y="850" width="60" height="50" fill="#10151d"/>
<rect x="60" y="850" width="430" height="50" fill="#302e2f"/>
<path d="M20 866.8 L28.8 865.6 V874.3 H20 Z M30 865.4 L40 864.2 V874.3 H30 Z M20 875.6 H28.8 V884.3 L20 883.2 Z M30 875.6 H40 V885.6 L30 884.5 Z" fill="#fff"/>
<circle cx="85" cy="875" r="12.2" fill="none" stroke="#fff" stroke-width="3"/>
<rect x="460.8" y="865.3" width="6.6" height="12" rx="3.3" fill="none" stroke="#a8a8a8" stroke-width="1.4"/>
<path d="M457.6 872.5 Q457.6 880.6 464.1 880.6 Q470.6 880.6 470.6 872.5 M464.1 880.6 V884.4 M460 884.6 H468.2" fill="none" stroke="#a8a8a8" stroke-width="1.3"/>
<rect x="511.8" y="866.8" width="15.6" height="16.6" fill="none" stroke="#fff" stroke-width="1.4"/>
<path d="M509.4 869 H507.3 V881 H509.4 M529.8 869 H531.9 V881 H529.8" fill="none" stroke="#fff" stroke-width="1.3"/>
<path d="M571 866 H580 L582.3 868.3 H597.3 V885.5 H571 Z" fill="#f5cf6a"/>
<path d="M571 868.5 H597.3 V885.5 H571 Z" fill="#f9dc8b"/>
<path d="M575.4 885.6 V876.3 H593.4 V885.6 H589.6 V879.8 H579.2 V885.6 Z" fill="#28a0e6"/>
<rect x="579.2" y="879.8" width="10.4" height="5.8" fill="#f9dc8b"/>
<circle cx="646.2" cy="874.3" r="13.8" fill="#e4481c"/>
<path d="M646.2 860.5 A13.8 13.8 0 0 1 659.9 876.5 Q657 869 652 866 Z" fill="#f7a12a"/>
<circle cx="648.4" cy="872.4" r="8.8" fill="#2a62c9"/>
<circle cx="650" cy="870.6" r="5" fill="#3d8be6" opacity="0.7"/>
<path d="M634.5 868 Q637.5 862.8 641.5 862.5 Q639.5 866 642.8 868.8 Q645.5 868.2 647.2 870.2 Q645.2 873.2 642.8 873.2 Q644 878.2 649.2 878.8 Q654.5 879 657.5 875.5 Q655.5 884.5 646 885.2 Q637.5 885.2 634.2 877.5 Q632.8 872.5 634.5 868 Z" fill="#ee6a1e"/>
<path d="M636 876 Q639.5 884.5 647 884.5 Q652.5 884.3 656 880" fill="none" stroke="#f9b533" stroke-width="1.6" opacity="0.8"/>
<rect x="679.2" y="850" width="60.7" height="47.7" fill="#393939"/>
<rect x="679.2" y="897.6" width="60.7" height="2.4" fill="#76b9ed"/>
<rect x="746" y="897.6" width="51.6" height="2.4" fill="#76b9ed"/>
<rect x="711" y="865.3" width="10.2" height="18.8" fill="#f4f6fa"/>
<path d="M712.3 867.5 H720 M712.3 869.5 H720 M712.3 871.5 H720 M712.3 873.5 H720 M712.3 875.5 H720 M712.3 877.5 H720 M712.3 879.5 H720 M712.3 881.5 H720" stroke="#8a9cc8" stroke-width="0.9"/>
<rect x="696.2" y="863.2" width="15" height="22.6" fill="#2b579a"/>
<path d="M698.4 870 L700.6 879.6 L703.2 872.8 L705.8 879.6 L708 870" fill="none" stroke="#fff" stroke-width="1.7" stroke-linejoin="round"/>
<rect x="755.7" y="860.2" width="30.7" height="27.2" fill="#fbfbfb"/>
<path d="M759.2 886.4 H784.6 L786.4 889.6 H760.5 Z" fill="#3a5a18"/>
<path d="M767.5 863.6 H779.5 L776.5 867 H768.6 Q767.6 867 767.6 868.5 V877.4 Q767.6 878.9 768.6 878.9 H776.5 L779.5 882.4 H767.5 Q763.6 882.4 763.6 878 V868 Q763.6 863.6 767.5 863.6 Z" fill="#3b6a14"/>
<path d="M764.2 868 Q764.2 864.4 767.5 864.4 H769 V881.6 H767.5 Q764.2 881.6 764.2 878 Z" fill="#6aa828"/>
<path d="M772 863.6 H779.5 L776.5 867 H772 Z M772 878.9 H776.5 L779.5 882.4 H772 Z" fill="#1a2a08"/>
<path d="M1197.5 878.3 L1204 871.7 L1210.5 878.3" fill="none" stroke="#fff" stroke-width="1.5"/>
<rect x="1234.3" y="870.6" width="17.6" height="10.2" fill="none" stroke="#fff" stroke-width="1.3"/>
<rect x="1252.2" y="873.6" width="1.7" height="4.2" fill="#fff"/>
<rect x="1235.8" y="872.2" width="7.8" height="7" fill="#fff"/>
<path d="M1276 883.5 A16 16 0 0 1 1292 867.5 M1279.3 883.5 A12.7 12.7 0 0 1 1292 870.8 M1282.6 883.5 A9.4 9.4 0 0 1 1292 874.1 M1285.9 883.5 A6.1 6.1 0 0 1 1292 877.4" fill="none" stroke="#fff" stroke-width="1.1"/>
<circle cx="1289.3" cy="881.3" r="1.6" fill="#fff"/>
<path d="M1313.6 872 H1317 L1322.2 867.8 V883.4 L1317 879.2 H1313.6 Z" fill="none" stroke="#fff" stroke-width="1.2"/>
<path d="M1325 872.5 Q1327 875.6 1325 878.7 M1328.2 870 Q1331.6 875.6 1328.2 881.2" fill="none" stroke="#fff" stroke-width="1.1"/>
<rect x="1354.4" y="866.8" width="27.6" height="15" rx="1" fill="none" stroke="#fff" stroke-width="1.3"/>
<path d="M1357.5 870.5 H1379 M1357.5 873.8 H1379" stroke="#fff" stroke-width="1.2" stroke-dasharray="1.4 1.3"/>
<path d="M1362 877.6 H1374.5" stroke="#fff" stroke-width="1.4"/>
</svg>
<div class="a" style="left:1396px;top:847.5px;width:204px;height:52.5px;background:linear-gradient(180deg,#74747a 0%,#3d4046 22%,#25282e 45%,#1c1e24 100%)"></div>
<div class="a" style="left:1540px;top:855px;width:40px;height:40px;background:radial-gradient(closest-side,rgba(110,110,115,0.45),rgba(110,110,115,0))"></div>
<div class="a" style="left:1585px;top:847.5px;width:15px;height:52.5px;background:linear-gradient(90deg,rgba(60,80,120,0),rgba(60,80,120,0.85))"></div>
<svg style="left:0;top:0" width="1600" height="900" viewBox="0 0 1600 900">
</svg>
<span class="lb" style="left:699.00px;top:10.90px;font-family:&quot;Liberation Sans&quot;;font-weight:400;font-size:16.35px;line-height:16.35px;color:#fff;font-style:normal;transform:scaleX(0.9159);">Lorem Ipsum Example - Word</span>
<span class="lb" style="left:1311.99px;top:11.39px;font-family:&quot;Liberation Sans&quot;;font-weight:400;font-size:16.42px;line-height:16.42px;color:#fff;font-style:normal;transform:scaleX(0.9205);">Sign in</span>
<span class="lb" style="left:25.11px;top:52.44px;font-family:&quot;Liberation Sans&quot;;font-weight:400;font-size:14.53px;line-height:14.53px;color:#fff;font-style:normal;transform:scaleX(0.9812);">File</span>
<span class="lb" style="left:88.74px;top:54.29px;font-family:&quot;Liberation Sans&quot;;font-weight:400;font-size:14.53px;line-height:14.53px;color:#2b579a;font-style:normal;transform:scaleX(1.0835);">Home</span>
<span class="lb" style="left:153.04px;top:54.29px;font-family:&quot;Liberation Sans&quot;;font-weight:400;font-size:14.53px;line-height:14.53px;color:#fff;font-style:normal;transform:scaleX(1.0377);">Insert</span>
<span class="lb" style="left:214.19px;top:54.29px;font-family:&quot;Liberation Sans&quot;;font-weight:400;font-size:14.53px;line-height:14.53px;color:#fff;font-style:normal;transform:scaleX(1.0411);">Draw</span>
<span class="lb" style="left:272.37px;top:54.29px;font-family:&quot;Liberation Sans&quot;;font-weight:400;font-size:14.53px;line-height:14.53px;color:#fff;font-style:normal;transform:scaleX(1.0610);">Design</span>
<span class="lb" style="left:342.38px;top:54.29px;font-family:&quot;Liberation Sans&quot;;font-weight:400;font-size:14.53px;line-height:14.53px;color:#fff;font-style:normal;transform:scaleX(1.0461);">Layout</span>
<span class="lb" style="left:410.49px;top:54.29px;font-family:&quot;Liberation Sans&quot;;font-weight:400;font-size:14.53px;line-height:14.53px;color:#fff;font-style:normal;transform:scaleX(0.9549);">References</span>
<span class="lb" style="left:504.77px;top:54.29px;font-family:&quot;Liberation Sans&quot;;font-weight:400;font-size:14.53px;line-height:14.53px;color:#fff;font-style:normal;transform:scaleX(1.0562);">Mailings</span>
<span class="lb" style="left:584.28px;top:54.29px;font-family:&quot;Liberation Sans&quot;;font-weight:400;font-size:14.53px;line-height:14.53px;color:#fff;font-style:normal;transform:scaleX(0.9589);">Review</span>
<span class="lb" style="left:653.86px;top:54.29px;font-family:&quot;Liberation Sans&quot;;font-weight:400;font-size:14.53px;line-height:14.53px;color:#fff;font-style:normal;transform:scaleX(0.9966);">View</span>
<span class="lb" style="left:730.70px;top:54.29px;font-family:&quot;Liberation Sans&quot;;font-weight:400;font-size:14.53px;line-height:14.53px;color:#d4deec;font-style:normal;transform:scaleX(1.0477);">Tell me what you want to do</span>
<span class="lb" style="left:1499.54px;top:54.43px;font-family:&quot;Liberation Sans&quot;;font-weight:400;font-size:15.55px;line-height:15.55px;color:#fff;font-style:normal;transform:scaleX(0.9094);-webkit-text-stroke-width:0.6px">Share</span>
<span class="lb" style="left:9.71px;top:129.85px;font-family:&quot;Liberation Sans&quot;;font-weight:400;font-size:13.52px;line-height:13.52px;color:#333;font-style:normal;transform:scaleX(1.0107);">Paste</span>
<span class="lb" style="left:76.27px;top:89.34px;font-family:&quot;Liberation Sans&quot;;font-weight:400;font-size:14.24px;line-height:14.24px;color:#a0a0a0;font-style:normal;transform:scaleX(1.0297);">Cut</span>
<span class="lb" style="left:76.25px;top:116.24px;font-family:&quot;Liberation Sans&quot;;font-weight:400;font-size:14.24px;line-height:14.24px;color:#a0a0a0;font-style:normal;transform:scaleX(1.0469);">Copy</span>
<span class="lb" style="left:76.43px;top:143.74px;font-family:&quot;Liberation Sans&quot;;font-weight:400;font-size:14.24px;line-height:14.24px;color:#3c3c3c;font-style:normal;transform:scaleX(1.0272);">Format Painter</span>
<span class="lb" style="left:51.93px;top:171.85px;font-family:&quot;Liberation Sans&quot;;font-weight:400;font-size:13.52px;line-height:13.52px;color:#555;font-style:normal;transform:scaleX(0.9970);">Clipboard</span>
<span class="lb" style="left:188.72px;top:97.09px;font-family:&quot;Liberation Sans&quot;;font-weight:400;font-size:16.42px;line-height:16.42px;color:#333;font-style:normal;transform:scaleX(0.8662);">Times New R</span>
<span class="lb" style="left:290.78px;top:97.09px;font-family:&quot;Liberation Sans&quot;;font-weight:400;font-size:16.42px;line-height:16.42px;color:#333;font-style:normal;transform:scaleX(0.9319);">12</span>
<span class="lb" style="left:302.74px;top:172.72px;font-family:&quot;Liberation Sans&quot;;font-weight:400;font-size:12.50px;line-height:12.50px;color:#555;font-style:normal;transform:scaleX(1.0555);">Font</span>
<span class="lb" style="left:550.97px;top:172.10px;font-family:&quot;Liberation Sans&quot;;font-weight:400;font-size:13.23px;line-height:13.23px;color:#555;font-style:normal;transform:scaleX(0.9747);">Paragraph</span>
<span class="lb" style="left:1060.38px;top:171.61px;font-family:&quot;Liberation Sans&quot;;font-weight:400;font-size:13.81px;line-height:13.81px;color:#555;font-style:normal;transform:scaleX(0.9053);">Styles</span>
<span class="lb" style="left:1485.91px;top:172.72px;font-family:&quot;Liberation Sans&quot;;font-weight:400;font-size:12.50px;line-height:12.50px;color:#555;font-style:normal;transform:scaleX(1.0859);">Editing</span>
<span class="lb" style="left:1490.49px;top:86.55px;font-family:&quot;Liberation Sans&quot;;font-weight:400;font-size:15.41px;line-height:15.41px;color:#333;font-style:normal;transform:scaleX(0.9844);">Find</span>
<span class="lb" style="left:1490.87px;top:113.74px;font-family:&quot;Liberation Sans&quot;;font-weight:400;font-size:14.24px;line-height:14.24px;color:#333;font-style:normal;transform:scaleX(0.9876);">Replace</span>
<span class="lb" style="left:1491.00px;top:139.55px;font-family:&quot;Liberation Sans&quot;;font-weight:400;font-size:13.52px;line-height:13.52px;color:#333;font-style:normal;transform:scaleX(1.0308);">Select</span>
<span class="lb" style="left:732.41px;top:134.37px;font-family:&quot;Liberation Sans&quot;;font-weight:400;font-size:14.68px;line-height:14.68px;color:#444;font-style:normal;transform:scaleX(1.0122);">¶ Normal</span>
<span class="lb" style="left:812.83px;top:134.37px;font-family:&quot;Liberation Sans&quot;;font-weight:400;font-size:14.68px;line-height:14.68px;color:#444;font-style:normal;transform:scaleX(0.9740);">¶ No Spac...</span>
<span class="lb" style="left:907.81px;top:134.37px;font-family:&quot;Liberation Sans&quot;;font-weight:400;font-size:14.68px;line-height:14.68px;color:#444;font-style:normal;transform:scaleX(1.0118);">Heading 1</span>
<span class="lb" style="left:997.38px;top:134.37px;font-family:&quot;Liberation Sans&quot;;font-weight:400;font-size:14.68px;line-height:14.68px;color:#444;font-style:normal;transform:scaleX(1.0410);">Heading 2</span>
<span class="lb" style="left:1109.20px;top:134.37px;font-family:&quot;Liberation Sans&quot;;font-weight:400;font-size:14.68px;line-height:14.68px;color:#444;font-style:normal;transform:scaleX(1.0085);">Title</span>
<span class="lb" style="left:1187.24px;top:134.37px;font-family:&quot;Liberation Sans&quot;;font-weight:400;font-size:14.68px;line-height:14.68px;color:#444;font-style:normal;transform:scaleX(1.0407);">Subtitle</span>
<span class="lb" style="left:1263.03px;top:134.37px;font-family:&quot;Liberation Sans&quot;;font-weight:400;font-size:14.68px;line-height:14.68px;color:#444;font-style:normal;transform:scaleX(0.9846);">Subtle Em...</span>
<span class="lb" style="left:1359.85px;top:134.37px;font-family:&quot;Liberation Sans&quot;;font-weight:400;font-size:14.68px;line-height:14.68px;color:#444;font-style:normal;transform:scaleX(0.9811);">Emphasis</span>
<span class="lb" style="left:724.70px;top:103.28px;font-family:&quot;Liberation Sans&quot;;font-weight:400;font-size:17.15px;line-height:17.15px;color:#111;font-style:normal;transform:scaleX(0.9070);">AaBbCcDc</span>
<span class="lb" style="left:814.50px;top:103.28px;font-family:&quot;Liberation Sans&quot;;font-weight:400;font-size:17.15px;line-height:17.15px;color:#111;font-style:normal;transform:scaleX(0.9118);">AaBbCcDc</span>
<span class="lb" style="left:905.00px;top:99.64px;font-family:&quot;Liberation Sans&quot;;font-weight:400;font-size:23.69px;line-height:23.69px;color:#2e74b5;font-style:normal;transform:scaleX(0.9010);-webkit-text-stroke:0.35px #fff">AaBbCc</span>
<span class="lb" style="left:995.00px;top:103.70px;font-family:&quot;Liberation Sans&quot;;font-weight:400;font-size:18.90px;line-height:18.90px;color:#2e74b5;font-style:normal;transform:scaleX(0.9670);-webkit-text-stroke:0.35px #fff">AaBbCcD</span>
<span class="lb" style="left:1085.00px;top:87.89px;font-family:&quot;Liberation Sans&quot;;font-weight:400;font-size:38.52px;line-height:38.52px;color:#111;font-style:normal;transform:scaleX(1.0582);-webkit-text-stroke:0.9px #fff">AaB</span>
<span class="lb" style="left:1175.00px;top:103.22px;font-family:&quot;Liberation Sans&quot;;font-weight:400;font-size:16.28px;line-height:16.28px;color:#444;font-style:normal;transform:scaleX(0.8760);letter-spacing:0.2em">AaBbCcD</span>
<span class="lb" style="left:1265.76px;top:103.23px;font-family:&quot;Liberation Sans&quot;;font-weight:400;font-size:17.44px;line-height:17.44px;color:#333;font-style:italic;transform:scaleX(0.8727);">AaBbCcDa</span>
<span class="lb" style="left:1355.76px;top:103.23px;font-family:&quot;Liberation Sans&quot;;font-weight:400;font-size:17.44px;line-height:17.44px;color:#111;font-style:italic;transform:scaleX(0.8727);">AaBbCcDa</span>
<span class="lb" style="left:4.99px;top:828.69px;font-family:&quot;Liberation Sans&quot;;font-weight:400;font-size:14.53px;line-height:14.53px;color:#444;font-style:normal;transform:scaleX(0.8686);">Page 1 of 3</span>
<span class="lb" style="left:86.53px;top:828.69px;font-family:&quot;Liberation Sans&quot;;font-weight:400;font-size:14.53px;line-height:14.53px;color:#444;font-style:normal;transform:scaleX(0.9182);">1387 words</span>
<span class="lb" style="left:204.99px;top:828.69px;font-family:&quot;Liberation Sans&quot;;font-weight:400;font-size:14.53px;line-height:14.53px;color:#444;font-style:normal;transform:scaleX(0.8713);">English (Canada)</span>
<span class="lb" style="left:1558.74px;top:828.81px;font-family:&quot;Liberation Sans&quot;;font-weight:400;font-size:13.81px;line-height:13.81px;color:#444;font-style:normal;transform:scaleX(0.9617);">100%</span>
<span class="lb" style="left:105.20px;top:868.19px;font-family:&quot;Liberation Sans&quot;;font-weight:400;font-size:17.73px;line-height:17.73px;color:#a8a8a8;font-style:normal;transform:scaleX(0.9878);">Ask me anything</span>
<span class="lb" style="left:191.96px;top:132.13px;font-family:&quot;Liberation Sans&quot;;font-weight:700;font-size:19.33px;line-height:19.33px;color:#333;font-style:normal;transform:scaleX(0.9159);">B</span>
<span class="lb" style="left:217.30px;top:130.50px;font-family:&quot;Liberation Serif&quot;;font-weight:400;font-size:20.31px;line-height:20.31px;color:#333;font-style:italic;transform:scaleX(1.3577);">I</span>
<span class="lb" style="left:240.79px;top:131.18px;font-family:&quot;Liberation Sans&quot;;font-weight:400;font-size:19.04px;line-height:19.04px;color:#333;font-style:normal;transform:scaleX(1.0598);">U</span>
<span class="lb" style="left:274.18px;top:133.72px;font-family:&quot;Liberation Sans&quot;;font-weight:400;font-size:16.28px;line-height:16.28px;color:#444;font-style:normal;transform:scaleX(0.7978);">abc</span>
<span class="lb" style="left:302.87px;top:135.44px;font-family:&quot;Liberation Sans&quot;;font-weight:400;font-size:14.24px;line-height:14.24px;color:#333;font-style:normal;transform:scaleX(1.2314);">X</span>
<span class="lb" style="left:314.37px;top:143.56px;font-family:&quot;Liberation Sans&quot;;font-weight:400;font-size:8.43px;line-height:8.43px;color:#4a5f9a;font-style:normal;transform:scaleX(1.0315);">2</span>
<span class="lb" style="left:328.02px;top:136.44px;font-family:&quot;Liberation Sans&quot;;font-weight:400;font-size:14.24px;line-height:14.24px;color:#333;font-style:normal;transform:scaleX(1.1164);">X</span>
<span class="lb" style="left:338.97px;top:131.04px;font-family:&quot;Liberation Sans&quot;;font-weight:400;font-size:8.58px;line-height:8.58px;color:#4a5f9a;font-style:normal;transform:scaleX(1.0140);">2</span>
<span class="lb" style="left:343.80px;top:95.56px;font-family:&quot;Liberation Sans&quot;;font-weight:400;font-size:19.77px;line-height:19.77px;color:#333;font-style:normal;transform:scaleX(0.9504);">A</span>
<span class="lb" style="left:369.00px;top:97.64px;font-family:&quot;Liberation Sans&quot;;font-weight:400;font-size:16.13px;line-height:16.13px;color:#333;font-style:normal;transform:scaleX(0.9673);">A</span>
<span class="lb" style="left:400.30px;top:94.64px;font-family:&quot;Liberation Sans&quot;;font-weight:400;font-size:18.02px;line-height:18.02px;color:#333;font-style:normal;transform:scaleX(0.8959);">Aa</span>
<span class="lb" style="left:448.00px;top:95.07px;font-family:&quot;Liberation Sans&quot;;font-weight:400;font-size:13.74px;line-height:13.74px;color:#333;font-style:normal;transform:scaleX(0.7722);">A</span>
<span class="lb" style="left:434.75px;top:130.56px;font-family:&quot;Liberation Sans&quot;;font-weight:400;font-size:18.53px;line-height:18.53px;color:#444;font-style:normal;transform:scaleX(0.9525);">A</span>
<span class="lb" style="left:394.32px;top:130.25px;font-family:&quot;Liberation Sans&quot;;font-weight:400;font-size:12.57px;line-height:12.57px;color:#444;font-style:normal;transform:scaleX(0.5521);">ab</span>
<span class="lb" style="left:1537.78px;top:842.51px;font-family:&quot;Liberation Serif&quot;;font-weight:700;font-size:18.02px;line-height:18.02px;color:#1e1e1e;font-style:normal;transform:scaleX(1.1657);">DIY</span>
<svg style="left:0;top:0" width="1600" height="900" viewBox="0 0 1600 900">
<rect x="980.2" y="92" width="13.5" height="30" fill="#fff"/>
<rect x="1070.8" y="92" width="13" height="30" fill="#fff"/>
<rect x="1156.6" y="86" width="15" height="36" fill="#fff"/>
<rect x="1250.5" y="92" width="13" height="30" fill="#fff"/>
</svg>

</body></html>
